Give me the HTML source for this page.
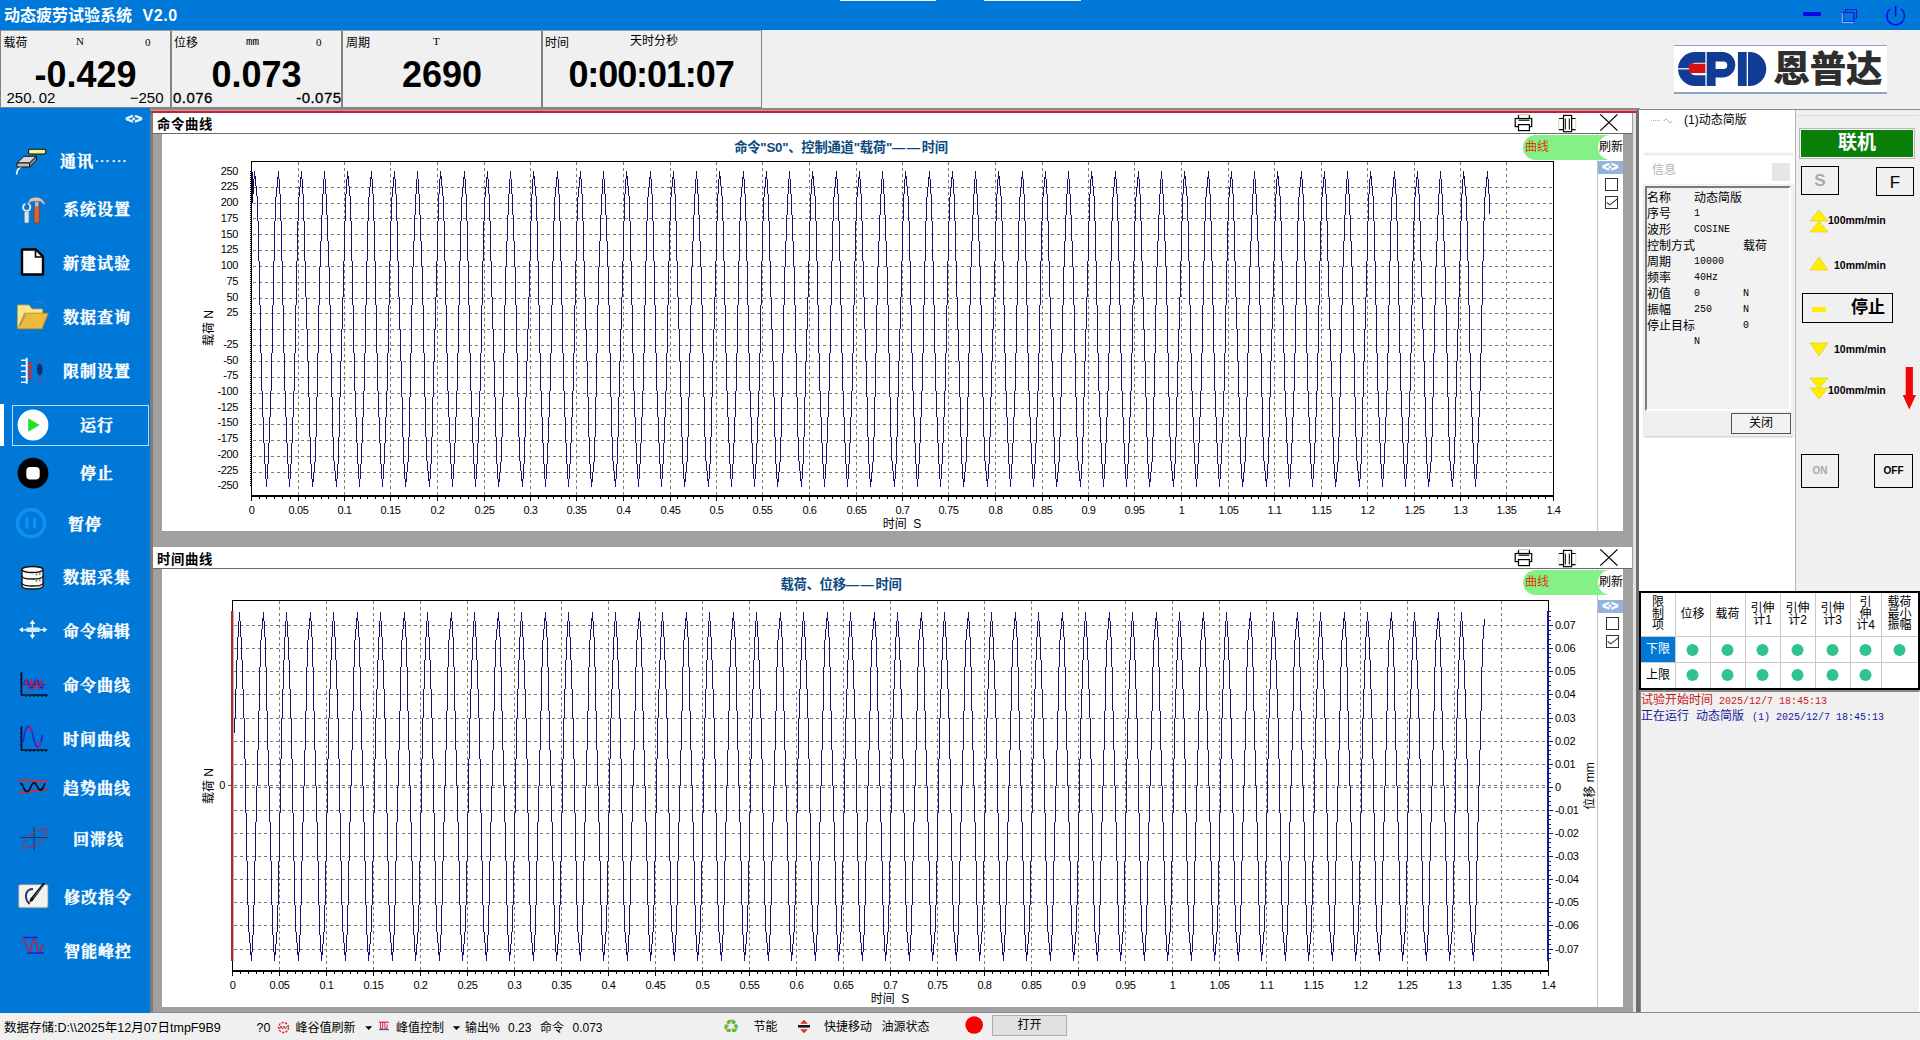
<!DOCTYPE html><html lang="zh-CN"><head><meta charset="utf-8"><title>动态疲劳试验系统 V2.0</title><style>*{box-sizing:border-box;margin:0;padding:0}
html,body{width:1920px;height:1040px;overflow:hidden;background:#f0f0f0}
body{position:relative;font-family:"Liberation Sans","Noto Sans CJK SC",sans-serif;font-size:12px;color:#000}
.a{position:absolute;white-space:nowrap}
.ss{font-family:"Liberation Sans","Noto Sans CJK SC",sans-serif}
.sf{font-family:"Liberation Serif","Noto Serif CJK SC",serif}
.mono{font-family:"Liberation Mono","Noto Sans CJK SC",monospace}
.b{font-weight:bold}
.c{text-align:center}
.r{text-align:right}
.menu{color:#fff;-webkit-text-stroke:.35px #fff;font-family:"Liberation Serif","Noto Serif CJK SC",serif;font-weight:bold;font-size:16px;letter-spacing:1px;line-height:20px}
.big{font-weight:bold;font-size:36px;line-height:40px;text-align:center}
.tick{font-size:11px;line-height:12px;color:#000;letter-spacing:-.4px}
svg{position:absolute;left:0;top:0;overflow:visible}
.sm{font-family:"Liberation Mono",monospace;font-size:10px;transform:scaleY(1.18);transform-origin:0 55%}
</style></head><body><div class="a " style="left:0px;top:0px;width:1920px;height:30px;background:#0078d7"></div><div class="a " style="left:4px;top:4px;color:#fff;font-weight:bold;font-size:16px;line-height:24px">动态疲劳试验系统&nbsp; <span style="letter-spacing:.6px;margin-left:1.500px">V2.0</span></div><div class="a " style="left:840px;top:0px;width:96px;height:1px;background:#f0f0f0"></div><div class="a " style="left:984px;top:0px;width:97px;height:1px;background:#f0f0f0"></div><svg width="1920" height="30" viewBox="0 0 1920 30"><rect x="1803" y="12" width="18" height="4" fill="#0606e0"/><path d="M1845.500 12V9.500H1856.500V18.500H1854" fill="none" stroke="#1818d8" stroke-width="1.200"/><rect x="1842.800" y="12.500" width="11" height="9.500" fill="none" stroke="#1818d8" stroke-width="1.200"/><path d="M1842.300 13V22.600H1853.500" fill="none" stroke="#c8dcf4" stroke-width="1" opacity=".8"/><path d="M1890.300 9A8.800 8.800 0 1 0 1901 9" fill="none" stroke="#0a0af0" stroke-width="1.500"/><path d="M1895.600 6V16.500" stroke="#0a0af0" stroke-width="1.600"/></svg><div class="a " style="left:0px;top:30px;width:1920px;height:79px;background:#f0f0f0"></div><div class="a " style="left:0px;top:30px;width:171px;height:78px;border:1px solid #828282;border-top-color:#a0a0a0;background:#f0f0f0"></div><div class="a " style="left:171px;top:30px;width:171px;height:78px;border:1px solid #828282;border-top-color:#a0a0a0;background:#f0f0f0"></div><div class="a " style="left:342px;top:30px;width:200px;height:78px;border:1px solid #828282;border-top-color:#a0a0a0;background:#f0f0f0"></div><div class="a " style="left:542px;top:30px;width:220px;height:78px;border:1px solid #828282;border-top-color:#a0a0a0;background:#f0f0f0"></div><div class="a " style="left:3.5px;top:36px;font-size:12px;line-height:14px">载荷</div><div class="a sf" style="left:76px;top:34px;font-size:12px;line-height:14px;font-size:11px">N</div><div class="a sf" style="left:145px;top:35px;font-size:12px;line-height:14px;font-size:11px">0</div><div class="a " style="left:174px;top:36px;font-size:12px;line-height:14px">位移</div><div class="a mono" style="left:246px;top:35px;font-size:12px;line-height:14px;font-size:11px">mm</div><div class="a sf" style="left:316px;top:35px;font-size:12px;line-height:14px;font-size:11px">0</div><div class="a " style="left:346px;top:36px;font-size:12px;line-height:14px">周期</div><div class="a sf" style="left:433px;top:34px;font-size:12px;line-height:14px;font-size:11px">T</div><div class="a " style="left:545px;top:36px;font-size:12px;line-height:14px">时间</div><div class="a " style="left:630px;top:33.5px;font-size:12px;line-height:14px">天时分秒</div><div class="a big" style="left:0px;top:55px;width:171px;height:40px;">-0.429</div><div class="a big" style="left:171px;top:55px;width:171px;height:40px;">0.073</div><div class="a big" style="left:342px;top:55px;width:200px;height:40px;">2690</div><div class="a big" style="left:541px;top:55px;width:220px;height:40px;letter-spacing:-1.100px">0:00:01:07</div><div class="a " style="left:6.5px;top:89.5px;font-size:15px;line-height:16px">250.&#8201;02</div><div class="a " style="left:100px;top:89.5px;width:63.5px;height:16px;font-size:15px;line-height:16px;text-align:right">−250</div><div class="a " style="left:173px;top:90px;font-size:15px;line-height:16px;letter-spacing:.45px;-webkit-text-stroke:.3px #000">0.076</div><div class="a " style="left:280px;top:90px;width:61.5px;height:16px;font-size:15px;line-height:16px;letter-spacing:.45px;-webkit-text-stroke:.3px #000;text-align:right">-0.075</div><div class="a " style="left:1674px;top:45px;width:213px;height:49px;background:#fff"></div><div class="a " style="left:1674px;top:44.8px;width:213px;height:1.6px;background:#8ea4c4"></div><div class="a " style="left:1674px;top:92.2px;width:213px;height:1.8px;background:#8ea4c4"></div><svg width="1920" height="110" viewBox="0 0 1920 110"><path d="M1705.400 52H1695A17 17 0 0 0 1695 86H1705.400V75.300H1695.500A6.300 6.300 0 0 1 1695.500 62.700H1705.400Z" fill="#103c96"/><rect x="1678" y="68.200" width="11" height="1.200" fill="#fff"/><rect x="1689" y="63.700" width="16.400" height="9.400" fill="#d41414"/><path d="M1706.700 52H1722.500A12.800 12.800 0 0 1 1722.500 77.600H1715.600V86H1706.700ZM1715.600 61.500V69H1723.500A3.750 3.750 0 0 0 1723.500 61.500Z" fill="#103c96" fill-rule="evenodd"/><rect x="1737.900" y="52" width="8.800" height="34" fill="#103c96"/><path d="M1748 52H1749.500A16.800 17 0 0 1 1749.500 86H1748Z" fill="#103c96"/></svg><div class="a " style="left:1773.5px;top:47.5px;font-size:36.500px;line-height:44px;font-weight:900;color:#2e2e2e;letter-spacing:-0.300px">恩普达</div><div class="a " style="left:0px;top:108px;width:150px;height:905px;background:#0078d7"></div><div class="a " style="left:125.5px;top:110.5px;color:#eefaff;font-weight:bold;font-size:12.500px;line-height:16px;letter-spacing:-1.100px;-webkit-text-stroke:.7px #eefaff">&lt;·&gt;</div><div class="a " style="left:0px;top:404px;width:4px;height:42px;background:#fff"></div><div class="a " style="left:12px;top:404.5px;width:137px;height:41.5px;border:1px solid #b8dcf4"></div><div class="a menu" style="left:60px;top:151px;">通讯<span style="font-family:'Noto Serif CJK SC',serif">……</span></div><div class="a menu" style="left:63px;top:200px;">系统设置</div><div class="a menu" style="left:63px;top:254px;">新建试验</div><div class="a menu" style="left:63px;top:308px;">数据查询</div><div class="a menu" style="left:63px;top:362px;">限制设置</div><div class="a menu" style="left:80px;top:416px;">运行</div><div class="a menu" style="left:80px;top:464px;">停止</div><div class="a menu" style="left:68px;top:515px;">暂停</div><div class="a menu" style="left:63px;top:568px;">数据采集</div><div class="a menu" style="left:63px;top:622px;">命令编辑</div><div class="a menu" style="left:63px;top:676px;">命令曲线</div><div class="a menu" style="left:63px;top:730px;">时间曲线</div><div class="a menu" style="left:63px;top:779px;">趋势曲线</div><div class="a menu" style="left:73px;top:830px;">回滞线</div><div class="a menu" style="left:64px;top:888px;">修改指令</div><div class="a menu" style="left:64px;top:942px;">智能峰控</div><svg width="160" height="1040" viewBox="0 0 160 1040"><path d="M22.500 166Q17 168 16.600 174.500" fill="none" stroke="#fff" stroke-width="1.800"/><path d="M17 163L24 156.300H36.500L29.600 163Z" fill="#d6d6d6" stroke="#111" stroke-width="1"/><path d="M17 163H29.600V167H17Z" fill="#c0c0c0" stroke="#111" stroke-width="1"/><path d="M29.600 163L36.500 156.300V160.300L29.600 167Z" fill="#8a8a8a" stroke="#111" stroke-width="1"/><rect x="28.500" y="149.300" width="17.300" height="4.700" rx="1.500" fill="#f6ec70" stroke="#111" stroke-width="1.100"/><path d="M31 151.700H44" stroke="#fff" stroke-width="1.200" stroke-dasharray="1 1"/><path d="M34.200 206H39.200V222.300Q36.700 224 34.200 222.300Z" fill="#e4602c" stroke="#9a3210" stroke-width=".6"/><path d="M35 200H38.500V206.500H35Z" fill="#b8bcc0"/><path d="M28 203Q29 198 33 197.500Q41 195.500 45 203Q45.500 205 43.500 204.500Q41 201 38.500 201.500H33Q30 201.500 29 204Z" fill="#c4c8cc" stroke="#5a6068" stroke-width=".7"/><circle cx="26.700" cy="207.300" r="3.600" fill="none" stroke="#e4e8ec" stroke-width="2"/><path d="M24.500 211.500H28.900V222.300Q26.700 223.600 24.500 222.300Z" fill="#e0e4e8" stroke="#8a9098" stroke-width=".5"/><path d="M25.500 203L28.500 206" stroke="#0078d7" stroke-width="1.800"/><path d="M22 249.500H36L43 256.500V274.500H22Z" fill="#fff" stroke="#000" stroke-width="2.400" stroke-linejoin="round"/><path d="M35.500 250.500V257H42" fill="none" stroke="#000" stroke-width="1.600"/><path d="M17.500 305H29L32 309H42.500V328.500H17.500Z" fill="#f6e58c" stroke="#c8a848" stroke-width=".8"/><path d="M17.800 328.800L24.500 313.200H48.300L42 328.800Z" fill="#eebc3c" stroke="#b8861c" stroke-width=".8"/><path d="M20 325L25.500 315" stroke="#8a7860" stroke-width="1.400" stroke-dasharray="1.500 1"/><path d="M36 302Q43 300 46 307" fill="none" stroke="#8a8aa0" stroke-width="1" stroke-dasharray="2 1.500" opacity=".8"/><path d="M26.700 357.800V383.700" stroke="#f0f8ff" stroke-width="2"/><path d="M21 360.200H26M21 365.700H26M21 371.200H26M21 376.700H26M21 382.200H26" stroke="#f0f8ff" stroke-width="1.600"/><path d="M30 362V380" stroke="#e02020" stroke-width="3.500" stroke-dasharray="2.500 1.200"/><path d="M39.700 358.500V383.500" stroke="#c83848" stroke-width="1.200" stroke-dasharray="3 1.500"/><ellipse cx="39.700" cy="369.500" rx="2.800" ry="6" fill="#10306c"/><circle cx="33" cy="425" r="15.400" fill="#fff"/><path d="M28.200 418.300L39.700 425L28.200 431.700Z" fill="#22e022"/><circle cx="33" cy="473.200" r="15.400" fill="#000"/><rect x="26.300" y="467" width="13.400" height="12.600" rx="3.800" fill="#fff"/><circle cx="31" cy="523.200" r="13.500" fill="none" stroke="#1290f2" stroke-width="3.800"/><rect x="25.300" y="517.300" width="3.300" height="11.600" rx="1.600" fill="#1290f2"/><rect x="33" y="517.300" width="3.300" height="11.600" rx="1.600" fill="#1290f2"/><g fill="#fafafa" stroke="#111" stroke-width="1.300"><path d="M22 583V586Q22 589 32.500 589T43 586V583Z"/><path d="M22 576V583Q22 586 32.500 586T43 583V576Z"/><path d="M22 569.500V576Q22 579 32.500 579T43 576V569.500Z"/><ellipse cx="32.500" cy="569.500" rx="10.500" ry="3"/></g><g fill="#30b030"><circle cx="36.500" cy="574.500" r=".9"/><circle cx="36.500" cy="581" r=".9"/><circle cx="36.500" cy="586.500" r=".9"/></g><g fill="#e03030"><circle cx="39.800" cy="573.800" r=".9"/><circle cx="39.800" cy="580.300" r=".9"/><circle cx="39.800" cy="586" r=".9"/></g><g fill="#f4faff"><path d="M19 629.800L23 627V632.600ZM47.400 629.800L43.400 627V632.600ZM32.400 619.800L29.600 624H35.200ZM32.400 639L29.600 634.800H35.200Z"/><rect x="22" y="629.100" width="22" height="1.400"/><rect x="31.700" y="622" width="1.400" height="15"/><rect x="26.300" y="627.600" width="13.400" height="4.400" rx="1" fill="#d4e8ff"/></g><path d="M21.500 672V695H47.500" fill="none" stroke="#0c0c1c" stroke-width="1.600"/><path d="M20 675H21.500M20 679H21.500M20 683H21.500M20 687H21.500M20 691H21.500M26 695V697M30 695V697M34 695V697M38 695V697M42 695V697M46 695V697" stroke="#0c0c1c" stroke-width="1"/><path d="M24 684Q26.500 676 29 684T34 684T39 684T44 684" fill="none" stroke="#2020d0" stroke-width="1.400"/><path d="M24 685L26.500 680L29 689L31.500 680L34 689L36.500 680L39 689L41.500 680L44 686" fill="none" stroke="#c81838" stroke-width="1.200"/><path d="M23 684.500H45" stroke="#3030a8" stroke-width=".8"/><path d="M21.500 726V750H47.500" fill="none" stroke="#0c0c1c" stroke-width="1.600"/><path d="M20 729H21.500M20 733H21.500M20 737H21.500M20 741H21.500M20 745H21.500M26 750V752M30 750V752M34 750V752M38 750V752M42 750V752M46 750V752" stroke="#0c0c1c" stroke-width="1"/><path d="M23 742C26 722 30 722 33 736S39 752 42.600 735" fill="none" stroke="#2222e8" stroke-width="1.700"/><path d="M27 730L30 727.500L32 731M36.500 742L38.500 746L41 742" fill="none" stroke="#d02040" stroke-width="1.300"/><path d="M18.600 779.800L47.400 781.700M18.600 793.300L47.400 789.400" stroke="#d82838" stroke-width="1.700"/><path d="M20 784C23.500 782 23 791.500 27 791.500S30.500 783 34 783S37 790 40.500 790S43 784 45.500 784" fill="none" stroke="#0c0c14" stroke-width="1.800"/><path d="M34 827V851M20.500 837.500H48.400" stroke="#1c3058" stroke-width="1"/><path d="M23 848C23 838 36 828 46.500 829C46.500 839 33 849.500 23 848Z" fill="none" stroke="#a83050" stroke-width="1.200"/><rect x="18.600" y="884.600" width="29.400" height="23" rx="1.500" fill="#f2f2f0" stroke="#8a8a8a" stroke-width=".8"/><path d="M20 907.500H47" stroke="#b0b0b0" stroke-width="1.200"/><path d="M33 889C26 889 23 897 29.500 904" fill="none" stroke="#203868" stroke-width="2"/><path d="M45.300 883.500L43 883L30 899L29.500 902.500L32.500 901Z" fill="#101010"/><path d="M43.500 885L33 898" stroke="#7888a0" stroke-width=".7"/><path d="M23.400 937.500H37.800M27.200 953H43.600" stroke="#1818e0" stroke-width="1.600"/><path d="M22.400 941C26 936 26.500 952 29.500 952S31 939 34 939S36 952 39 952S41 941 43.600 947" fill="none" stroke="#d01838" stroke-width="1.500"/></svg><div class="a " style="left:150px;top:108px;width:1490px;height:904.5px;background:#a0a0a0"></div><div class="a " style="left:150px;top:108px;width:2.5px;height:904.5px;background:#7c7c7c"></div><div class="a " style="left:1633px;top:108px;width:2.6px;height:904.5px;background:#e4e4e4"></div><div class="a " style="left:1635.6px;top:108px;width:4.4px;height:904.5px;background:#6e6e6e"></div><div class="a " style="left:150px;top:108px;width:1490px;height:2px;background:#8a8a8a"></div><div class="a " style="left:151px;top:110px;width:1485px;height:3px;background:linear-gradient(#f08890 0,#f08890 30%,#b8243c 48%,#b8243c 100%)"></div><div class="a " style="left:153px;top:113px;width:1479px;height:21px;background:#fff;border-bottom:1px solid #6a6a6a"></div><div class="a " style="left:157px;top:116.5px;font-weight:bold;font-size:13.330px;line-height:16px;letter-spacing:.7px">命令曲线</div><div class="a " style="left:162px;top:134px;width:1460.5px;height:397px;background:#fff"></div><div class="a " style="left:1597px;top:134px;width:1px;height:397px;background:#c4c4c4"></div><div class="a " style="left:1523px;top:135px;width:99px;height:25px;background:#84f088;border-radius:13px"></div><div class="a " style="left:1598px;top:134.7px;width:25px;height:25px;background:#fff;border-radius:50%"></div><div class="a " style="left:1525px;top:140px;color:#e03800;font-size:12px;line-height:14px">曲线</div><div class="a " style="left:1599px;top:140px;color:#000;font-size:12px;line-height:14px">刷新</div><div class="a " style="left:1598px;top:161px;width:25px;height:12.5px;background:#93b3de"></div><div class="a " style="left:1602.2px;top:159.2px;color:#fff;font-weight:bold;font-size:12px;line-height:16px;letter-spacing:-1px;-webkit-text-stroke:.6px #fff">&lt;·&gt;</div><div class="a " style="left:1605px;top:178px;width:13px;height:13px;border:1px solid #333;background:#fff"></div><div class="a " style="left:1605px;top:196px;width:13px;height:13px;border:1px solid #333;background:#fff"></div><div class="a " style="left:541px;top:140px;width:600px;height:16px;text-align:center;font-weight:bold;font-size:13.330px;line-height:16px;color:#0c4a80;letter-spacing:-.25px">命令"S0"、控制通道"载荷"<span style="letter-spacing:1.500px">——</span>时间</div><svg width="1920" height="1040" viewBox="0 0 1920 1040" shape-rendering="crispEdges"><g shape-rendering="auto"><g fill="none" stroke="#000" stroke-width="1.200"><rect x="1515.2" y="118.5" width="16.500" height="8.100"/><path d="M1518.5 118.5V114.9M1529.4 118.5V114.9" /><path d="M1518.5 114.7H1529.4" stroke="#a8e0a8"/><rect x="1518.5" y="124.6" width="10.900" height="6" fill="#fff"/><path d="M1518.5 120.2H1529.4"/></g><g fill="none" stroke="#000" stroke-width="1.200"><rect x="1563.5" y="115.4" width="8.100" height="16.300"/><path d="M1565.3 118.5V129.5M1569.3 118.5V129.5" stroke-width="1"/><path d="M1558.8 118.5H1563.5M1571.6 118.5H1575.8M1558.8 129.6H1563.5M1571.6 129.6H1575.8"/><path d="M1558.8 118.5V129.6M1575.8 118.5V129.6" stroke="#c0e4b8" stroke-width="1"/></g><path d="M1600.3 114.4L1617.5 130.6M1617.5 114.4L1600.3 130.6" stroke="#000" stroke-width="1.300"/><path d="M1606.7 202.3l3 2.600l7.400-5.800" fill="none" stroke="#333" stroke-width="1.100"/></g><path d="M298.5 162V495M344.5 162V495M390.5 162V495M437.5 162V495M484.5 162V495M530.5 162V495M576.5 162V495M623.5 162V495M670.5 162V495M716.5 162V495M762.5 162V495M809.5 162V495M856.5 162V495M902.5 162V495M948.5 162V495M995.5 162V495M1042.5 162V495M1088.5 162V495M1134.5 162V495M1181.5 162V495M1228.5 162V495M1274.5 162V495M1321.5 162V495M1367.5 162V495M1414.5 162V495M1460.5 162V495M1506.5 162V495" stroke="#787878" stroke-width="1" stroke-dasharray="3 3" fill="none"/><path d="M253 187.5H1553M253 203.5H1553M253 218.5H1553M253 234.5H1553M253 250.5H1553M253 266.5H1553M253 282.5H1553M253 298.5H1553M253 313.5H1553M253 329.5H1553M253 345.5H1553M253 361.5H1553M253 377.5H1553M253 393.5H1553M253 408.5H1553M253 424.5H1553M253 440.5H1553M253 456.5H1553M253 472.5H1553" stroke="#787878" stroke-width="1" stroke-dasharray="3 3" fill="none"/><path d="M252.5 194V202M253.5 179V194M254.5 171V179M255.5 176V186M256.5 186V196M257.5 196V221M258.5 221V261M259.5 261V305M260.5 305V353M261.5 353V391M262.5 391V417M263.5 417V443M264.5 443V464M265.5 464V479M266.5 479V487M267.5 464V479M268.5 443V464M269.5 417V443M270.5 391V417M271.5 353V391M272.5 305V353M273.5 261V305M274.5 221V261M275.5 197V221M276.5 187V197M277.5 177V187M278.5 171V179M279.5 179V194M280.5 194V221M281.5 221V261M282.5 261V305M283.5 305V353M284.5 353V391M285.5 391V417M286.5 417V443M287.5 443V464M288.5 464V479M289.5 479V487M290.5 464V479M291.5 443V464M292.5 417V443M293.5 391V417M294.5 353V391M295.5 305V353M296.5 261V305M297.5 221V261M298.5 197V221M299.5 187V197M300.5 177V187M301.5 171V179M302.5 179V194M303.5 194V221M304.5 221V261M305.5 261V297M306.5 297V329M307.5 329V361M308.5 361V397M309.5 397V437M310.5 437V464M311.5 464V479M312.5 479V487M313.5 472V482M314.5 462V472M315.5 437V462M316.5 397V437M317.5 353V397M318.5 305V353M319.5 267V305M320.5 241V267M321.5 215V241M322.5 194V215M323.5 179V194M324.5 171V179M325.5 179V194M326.5 194V215M327.5 215V241M328.5 241V267M329.5 267V305M330.5 305V353M331.5 353V397M332.5 397V437M333.5 437V461M334.5 461V471M335.5 471V481M336.5 479V487M337.5 464V479M338.5 437V464M339.5 397V437M340.5 361V397M341.5 329V361M342.5 297V329M343.5 261V297M344.5 221V261M345.5 194V221M346.5 179V194M347.5 171V179M348.5 176V186M349.5 186V196M350.5 196V221M351.5 221V261M352.5 261V305M353.5 305V353M354.5 353V391M355.5 391V417M356.5 417V443M357.5 443V464M358.5 464V479M359.5 479V487M360.5 464V479M361.5 443V464M362.5 417V443M363.5 391V417M364.5 353V391M365.5 305V353M366.5 261V305M367.5 221V261M368.5 197V221M369.5 187V197M370.5 177V187M371.5 171V179M372.5 179V194M373.5 194V221M374.5 221V261M375.5 261V305M376.5 305V353M377.5 353V391M378.5 391V417M379.5 417V443M380.5 443V464M381.5 464V479M382.5 479V487M383.5 464V479M384.5 443V464M385.5 417V443M386.5 391V417M387.5 353V391M388.5 305V353M389.5 261V305M390.5 221V261M391.5 197V221M392.5 187V197M393.5 177V187M394.5 171V179M395.5 179V194M396.5 194V221M397.5 221V261M398.5 261V297M399.5 297V329M400.5 329V361M401.5 361V397M402.5 397V437M403.5 437V464M404.5 464V479M405.5 479V487M406.5 472V482M407.5 462V472M408.5 437V462M409.5 397V437M410.5 353V397M411.5 305V353M412.5 267V305M413.5 241V267M414.5 215V241M415.5 194V215M416.5 179V194M417.5 171V179M418.5 179V194M419.5 194V215M420.5 215V241M421.5 241V267M422.5 267V305M423.5 305V353M424.5 353V397M425.5 397V437M426.5 437V461M427.5 461V471M428.5 471V481M429.5 479V487M430.5 464V479M431.5 437V464M432.5 397V437M433.5 361V397M434.5 329V361M435.5 297V329M436.5 261V297M437.5 221V261M438.5 194V221M439.5 179V194M440.5 171V179M441.5 176V186M442.5 186V196M443.5 196V221M444.5 221V261M445.5 261V305M446.5 305V353M447.5 353V391M448.5 391V417M449.5 417V443M450.5 443V464M451.5 464V479M452.5 479V487M453.5 464V479M454.5 443V464M455.5 417V443M456.5 391V417M457.5 353V391M458.5 305V353M459.5 261V305M460.5 221V261M461.5 197V221M462.5 187V197M463.5 177V187M464.5 171V179M465.5 179V194M466.5 194V221M467.5 221V261M468.5 261V305M469.5 305V353M470.5 353V391M471.5 391V417M472.5 417V443M473.5 443V464M474.5 464V479M475.5 479V487M476.5 464V479M477.5 443V464M478.5 417V443M479.5 391V417M480.5 353V391M481.5 305V353M482.5 261V305M483.5 221V261M484.5 197V221M485.5 187V197M486.5 177V187M487.5 171V179M488.5 179V194M489.5 194V221M490.5 221V261M491.5 261V297M492.5 297V329M493.5 329V361M494.5 361V397M495.5 397V437M496.5 437V464M497.5 464V479M498.5 479V487M499.5 472V482M500.5 462V472M501.5 437V462M502.5 397V437M503.5 353V397M504.5 305V353M505.5 267V305M506.5 241V267M507.5 215V241M508.5 194V215M509.5 179V194M510.5 171V179M511.5 179V194M512.5 194V215M513.5 215V241M514.5 241V267M515.5 267V305M516.5 305V353M517.5 353V397M518.5 397V437M519.5 437V461M520.5 461V471M521.5 471V481M522.5 479V487M523.5 464V479M524.5 437V464M525.5 397V437M526.5 361V397M527.5 329V361M528.5 297V329M529.5 261V297M530.5 221V261M531.5 194V221M532.5 179V194M533.5 171V179M534.5 176V186M535.5 186V196M536.5 196V221M537.5 221V261M538.5 261V305M539.5 305V353M540.5 353V391M541.5 391V417M542.5 417V443M543.5 443V464M544.5 464V479M545.5 479V487M546.5 464V479M547.5 443V464M548.5 417V443M549.5 391V417M550.5 353V391M551.5 305V353M552.5 261V305M553.5 221V261M554.5 197V221M555.5 187V197M556.5 177V187M557.5 171V179M558.5 179V194M559.5 194V221M560.5 221V261M561.5 261V305M562.5 305V353M563.5 353V391M564.5 391V417M565.5 417V443M566.5 443V464M567.5 464V479M568.5 479V487M569.5 464V479M570.5 443V464M571.5 417V443M572.5 391V417M573.5 353V391M574.5 305V353M575.5 261V305M576.5 221V261M577.5 197V221M578.5 187V197M579.5 177V187M580.5 171V179M581.5 179V194M582.5 194V221M583.5 221V261M584.5 261V297M585.5 297V329M586.5 329V361M587.5 361V397M588.5 397V437M589.5 437V464M590.5 464V479M591.5 479V487M592.5 472V482M593.5 462V472M594.5 437V462M595.5 397V437M596.5 353V397M597.5 305V353M598.5 267V305M599.5 241V267M600.5 215V241M601.5 194V215M602.5 179V194M603.5 171V179M604.5 179V194M605.5 194V215M606.5 215V241M607.5 241V267M608.5 267V305M609.5 305V353M610.5 353V397M611.5 397V437M612.5 437V461M613.5 461V471M614.5 471V481M615.5 479V487M616.5 464V479M617.5 437V464M618.5 397V437M619.5 361V397M620.5 329V361M621.5 297V329M622.5 261V297M623.5 221V261M624.5 194V221M625.5 179V194M626.5 171V179M627.5 176V186M628.5 186V196M629.5 196V221M630.5 221V261M631.5 261V305M632.5 305V353M633.5 353V391M634.5 391V417M635.5 417V443M636.5 443V464M637.5 464V479M638.5 479V487M639.5 464V479M640.5 443V464M641.5 417V443M642.5 391V417M643.5 353V391M644.5 305V353M645.5 261V305M646.5 221V261M647.5 197V221M648.5 187V197M649.5 177V187M650.5 171V179M651.5 179V194M652.5 194V221M653.5 221V261M654.5 261V305M655.5 305V353M656.5 353V391M657.5 391V417M658.5 417V443M659.5 443V464M660.5 464V479M661.5 479V487M662.5 464V479M663.5 443V464M664.5 417V443M665.5 391V417M666.5 353V391M667.5 305V353M668.5 261V305M669.5 221V261M670.5 197V221M671.5 187V197M672.5 177V187M673.5 171V179M674.5 179V194M675.5 194V221M676.5 221V261M677.5 261V297M678.5 297V329M679.5 329V361M680.5 361V397M681.5 397V437M682.5 437V464M683.5 464V479M684.5 479V487M685.5 472V482M686.5 462V472M687.5 437V462M688.5 397V437M689.5 353V397M690.5 305V353M691.5 267V305M692.5 241V267M693.5 215V241M694.5 194V215M695.5 179V194M696.5 171V179M697.5 179V194M698.5 194V215M699.5 215V241M700.5 241V267M701.5 267V305M702.5 305V353M703.5 353V397M704.5 397V437M705.5 437V461M706.5 461V471M707.5 471V481M708.5 479V487M709.5 464V479M710.5 437V464M711.5 397V437M712.5 361V397M713.5 329V361M714.5 297V329M715.5 261V297M716.5 221V261M717.5 194V221M718.5 179V194M719.5 171V179M720.5 176V186M721.5 186V196M722.5 196V221M723.5 221V261M724.5 261V305M725.5 305V353M726.5 353V391M727.5 391V417M728.5 417V443M729.5 443V464M730.5 464V479M731.5 479V487M732.5 464V479M733.5 443V464M734.5 417V443M735.5 391V417M736.5 353V391M737.5 305V353M738.5 261V305M739.5 221V261M740.5 197V221M741.5 187V197M742.5 177V187M743.5 171V179M744.5 179V194M745.5 194V221M746.5 221V261M747.5 261V305M748.5 305V353M749.5 353V391M750.5 391V417M751.5 417V443M752.5 443V464M753.5 464V479M754.5 479V487M755.5 464V479M756.5 443V464M757.5 417V443M758.5 391V417M759.5 353V391M760.5 305V353M761.5 261V305M762.5 221V261M763.5 197V221M764.5 187V197M765.5 177V187M766.5 171V179M767.5 179V194M768.5 194V221M769.5 221V261M770.5 261V297M771.5 297V329M772.5 329V361M773.5 361V397M774.5 397V437M775.5 437V464M776.5 464V479M777.5 479V487M778.5 472V482M779.5 462V472M780.5 437V462M781.5 397V437M782.5 353V397M783.5 305V353M784.5 267V305M785.5 241V267M786.5 215V241M787.5 194V215M788.5 179V194M789.5 171V179M790.5 179V194M791.5 194V215M792.5 215V241M793.5 241V267M794.5 267V305M795.5 305V353M796.5 353V397M797.5 397V437M798.5 437V461M799.5 461V471M800.5 471V481M801.5 479V487M802.5 464V479M803.5 437V464M804.5 397V437M805.5 361V397M806.5 329V361M807.5 297V329M808.5 261V297M809.5 221V261M810.5 194V221M811.5 179V194M812.5 171V179M813.5 176V186M814.5 186V196M815.5 196V221M816.5 221V261M817.5 261V305M818.5 305V353M819.5 353V391M820.5 391V417M821.5 417V443M822.5 443V464M823.5 464V479M824.5 479V487M825.5 464V479M826.5 443V464M827.5 417V443M828.5 391V417M829.5 353V391M830.5 305V353M831.5 261V305M832.5 221V261M833.5 197V221M834.5 187V197M835.5 177V187M836.5 171V179M837.5 179V194M838.5 194V221M839.5 221V261M840.5 261V305M841.5 305V353M842.5 353V391M843.5 391V417M844.5 417V443M845.5 443V464M846.5 464V479M847.5 479V487M848.5 464V479M849.5 443V464M850.5 417V443M851.5 391V417M852.5 353V391M853.5 305V353M854.5 261V305M855.5 221V261M856.5 197V221M857.5 187V197M858.5 177V187M859.5 171V179M860.5 179V194M861.5 194V221M862.5 221V261M863.5 261V297M864.5 297V329M865.5 329V361M866.5 361V397M867.5 397V437M868.5 437V464M869.5 464V479M870.5 479V487M871.5 472V482M872.5 462V472M873.5 437V462M874.5 397V437M875.5 353V397M876.5 305V353M877.5 267V305M878.5 241V267M879.5 215V241M880.5 194V215M881.5 179V194M882.5 171V179M883.5 179V194M884.5 194V215M885.5 215V241M886.5 241V267M887.5 267V305M888.5 305V353M889.5 353V397M890.5 397V437M891.5 437V461M892.5 461V471M893.5 471V481M894.5 479V487M895.5 464V479M896.5 437V464M897.5 397V437M898.5 361V397M899.5 329V361M900.5 297V329M901.5 261V297M902.5 221V261M903.5 194V221M904.5 179V194M905.5 171V179M906.5 176V186M907.5 186V196M908.5 196V221M909.5 221V261M910.5 261V305M911.5 305V353M912.5 353V391M913.5 391V417M914.5 417V443M915.5 443V464M916.5 464V479M917.5 479V487M918.5 464V479M919.5 443V464M920.5 417V443M921.5 391V417M922.5 353V391M923.5 305V353M924.5 261V305M925.5 221V261M926.5 197V221M927.5 187V197M928.5 177V187M929.5 171V179M930.5 179V194M931.5 194V221M932.5 221V261M933.5 261V305M934.5 305V353M935.5 353V391M936.5 391V417M937.5 417V443M938.5 443V464M939.5 464V479M940.5 479V487M941.5 464V479M942.5 443V464M943.5 417V443M944.5 391V417M945.5 353V391M946.5 305V353M947.5 261V305M948.5 221V261M949.5 197V221M950.5 187V197M951.5 177V187M952.5 171V179M953.5 179V194M954.5 194V221M955.5 221V261M956.5 261V297M957.5 297V329M958.5 329V361M959.5 361V397M960.5 397V437M961.5 437V464M962.5 464V479M963.5 479V487M964.5 472V482M965.5 462V472M966.5 437V462M967.5 397V437M968.5 353V397M969.5 305V353M970.5 267V305M971.5 241V267M972.5 215V241M973.5 194V215M974.5 179V194M975.5 171V179M976.5 179V194M977.5 194V215M978.5 215V241M979.5 241V267M980.5 267V305M981.5 305V353M982.5 353V397M983.5 397V437M984.5 437V461M985.5 461V471M986.5 471V481M987.5 479V487M988.5 464V479M989.5 437V464M990.5 397V437M991.5 361V397M992.5 329V361M993.5 297V329M994.5 261V297M995.5 221V261M996.5 194V221M997.5 179V194M998.5 171V179M999.5 176V186M1000.5 186V196M1001.5 196V221M1002.5 221V261M1003.5 261V305M1004.5 305V353M1005.5 353V391M1006.5 391V417M1007.5 417V443M1008.5 443V464M1009.5 464V479M1010.5 479V487M1011.5 464V479M1012.5 443V464M1013.5 417V443M1014.5 391V417M1015.5 353V391M1016.5 305V353M1017.5 261V305M1018.5 221V261M1019.5 197V221M1020.5 187V197M1021.5 177V187M1022.5 171V179M1023.5 179V194M1024.5 194V221M1025.5 221V261M1026.5 261V305M1027.5 305V353M1028.5 353V391M1029.5 391V417M1030.5 417V443M1031.5 443V464M1032.5 464V479M1033.5 479V487M1034.5 464V479M1035.5 443V464M1036.5 417V443M1037.5 391V417M1038.5 353V391M1039.5 305V353M1040.5 261V305M1041.5 221V261M1042.5 197V221M1043.5 187V197M1044.5 177V187M1045.5 171V179M1046.5 179V194M1047.5 194V221M1048.5 221V261M1049.5 261V297M1050.5 297V329M1051.5 329V361M1052.5 361V397M1053.5 397V437M1054.5 437V464M1055.5 464V479M1056.5 479V487M1057.5 472V482M1058.5 462V472M1059.5 437V462M1060.5 397V437M1061.5 353V397M1062.5 305V353M1063.5 267V305M1064.5 241V267M1065.5 215V241M1066.5 194V215M1067.5 179V194M1068.5 171V179M1069.5 179V194M1070.5 194V215M1071.5 215V241M1072.5 241V267M1073.5 267V305M1074.5 305V353M1075.5 353V397M1076.5 397V437M1077.5 437V461M1078.5 461V471M1079.5 471V481M1080.5 479V487M1081.5 464V479M1082.5 437V464M1083.5 397V437M1084.5 361V397M1085.5 329V361M1086.5 297V329M1087.5 261V297M1088.5 221V261M1089.5 194V221M1090.5 179V194M1091.5 171V179M1092.5 176V186M1093.5 186V196M1094.5 196V221M1095.5 221V261M1096.5 261V305M1097.5 305V353M1098.5 353V391M1099.5 391V417M1100.5 417V443M1101.5 443V464M1102.5 464V479M1103.5 479V487M1104.5 464V479M1105.5 443V464M1106.5 417V443M1107.5 391V417M1108.5 353V391M1109.5 305V353M1110.5 261V305M1111.5 221V261M1112.5 197V221M1113.5 187V197M1114.5 177V187M1115.5 171V179M1116.5 179V194M1117.5 194V221M1118.5 221V261M1119.5 261V305M1120.5 305V353M1121.5 353V391M1122.5 391V417M1123.5 417V443M1124.5 443V464M1125.5 464V479M1126.5 479V487M1127.5 464V479M1128.5 443V464M1129.5 417V443M1130.5 391V417M1131.5 353V391M1132.5 305V353M1133.5 261V305M1134.5 221V261M1135.5 197V221M1136.5 187V197M1137.5 177V187M1138.5 171V179M1139.5 179V194M1140.5 194V221M1141.5 221V261M1142.5 261V297M1143.5 297V329M1144.5 329V361M1145.5 361V397M1146.5 397V437M1147.5 437V464M1148.5 464V479M1149.5 479V487M1150.5 472V482M1151.5 462V472M1152.5 437V462M1153.5 397V437M1154.5 353V397M1155.5 305V353M1156.5 267V305M1157.5 241V267M1158.5 215V241M1159.5 194V215M1160.5 179V194M1161.5 171V179M1162.5 179V194M1163.5 194V215M1164.5 215V241M1165.5 241V267M1166.5 267V305M1167.5 305V353M1168.5 353V397M1169.5 397V437M1170.5 437V461M1171.5 461V471M1172.5 471V481M1173.5 479V487M1174.5 464V479M1175.5 437V464M1176.5 397V437M1177.5 361V397M1178.5 329V361M1179.5 297V329M1180.5 261V297M1181.5 221V261M1182.5 194V221M1183.5 179V194M1184.5 171V179M1185.5 176V186M1186.5 186V196M1187.5 196V221M1188.5 221V261M1189.5 261V305M1190.5 305V353M1191.5 353V391M1192.5 391V417M1193.5 417V443M1194.5 443V464M1195.5 464V479M1196.5 479V487M1197.5 464V479M1198.5 443V464M1199.5 417V443M1200.5 391V417M1201.5 353V391M1202.5 305V353M1203.5 261V305M1204.5 221V261M1205.5 197V221M1206.5 187V197M1207.5 177V187M1208.5 171V179M1209.5 179V194M1210.5 194V221M1211.5 221V261M1212.5 261V305M1213.5 305V353M1214.5 353V391M1215.5 391V417M1216.5 417V443M1217.5 443V464M1218.5 464V479M1219.5 479V487M1220.5 464V479M1221.5 443V464M1222.5 417V443M1223.5 391V417M1224.5 353V391M1225.5 305V353M1226.5 261V305M1227.5 221V261M1228.5 197V221M1229.5 187V197M1230.5 177V187M1231.5 171V179M1232.5 179V194M1233.5 194V221M1234.5 221V261M1235.5 261V297M1236.5 297V329M1237.5 329V361M1238.5 361V397M1239.5 397V437M1240.5 437V464M1241.5 464V479M1242.5 479V487M1243.5 472V482M1244.5 462V472M1245.5 437V462M1246.5 397V437M1247.5 353V397M1248.5 305V353M1249.5 267V305M1250.5 241V267M1251.5 215V241M1252.5 194V215M1253.5 179V194M1254.5 171V179M1255.5 179V194M1256.5 194V215M1257.5 215V241M1258.5 241V267M1259.5 267V305M1260.5 305V353M1261.5 353V397M1262.5 397V437M1263.5 437V461M1264.5 461V471M1265.5 471V481M1266.5 479V487M1267.5 464V479M1268.5 437V464M1269.5 397V437M1270.5 361V397M1271.5 329V361M1272.5 297V329M1273.5 261V297M1274.5 221V261M1275.5 194V221M1276.5 179V194M1277.5 171V179M1278.5 176V186M1279.5 186V196M1280.5 196V221M1281.5 221V261M1282.5 261V305M1283.5 305V353M1284.5 353V391M1285.5 391V417M1286.5 417V443M1287.5 443V464M1288.5 464V479M1289.5 479V487M1290.5 464V479M1291.5 443V464M1292.5 417V443M1293.5 391V417M1294.5 353V391M1295.5 305V353M1296.5 261V305M1297.5 221V261M1298.5 197V221M1299.5 187V197M1300.5 177V187M1301.5 171V179M1302.5 179V194M1303.5 194V221M1304.5 221V261M1305.5 261V305M1306.5 305V353M1307.5 353V391M1308.5 391V417M1309.5 417V443M1310.5 443V464M1311.5 464V479M1312.5 479V487M1313.5 464V479M1314.5 443V464M1315.5 417V443M1316.5 391V417M1317.5 353V391M1318.5 305V353M1319.5 261V305M1320.5 221V261M1321.5 197V221M1322.5 187V197M1323.5 177V187M1324.5 171V179M1325.5 179V194M1326.5 194V221M1327.5 221V261M1328.5 261V297M1329.5 297V329M1330.5 329V361M1331.5 361V397M1332.5 397V437M1333.5 437V464M1334.5 464V479M1335.5 479V487M1336.5 472V482M1337.5 462V472M1338.5 437V462M1339.5 397V437M1340.5 353V397M1341.5 305V353M1342.5 267V305M1343.5 241V267M1344.5 215V241M1345.5 194V215M1346.5 179V194M1347.5 171V179M1348.5 179V194M1349.5 194V215M1350.5 215V241M1351.5 241V267M1352.5 267V305M1353.5 305V353M1354.5 353V397M1355.5 397V437M1356.5 437V461M1357.5 461V471M1358.5 471V481M1359.5 479V487M1360.5 464V479M1361.5 437V464M1362.5 397V437M1363.5 361V397M1364.5 329V361M1365.5 297V329M1366.5 261V297M1367.5 221V261M1368.5 194V221M1369.5 179V194M1370.5 171V179M1371.5 176V186M1372.5 186V196M1373.5 196V221M1374.5 221V261M1375.5 261V305M1376.5 305V353M1377.5 353V391M1378.5 391V417M1379.5 417V443M1380.5 443V464M1381.5 464V479M1382.5 479V487M1383.5 464V479M1384.5 443V464M1385.5 417V443M1386.5 391V417M1387.5 353V391M1388.5 305V353M1389.5 261V305M1390.5 221V261M1391.5 197V221M1392.5 187V197M1393.5 177V187M1394.5 171V179M1395.5 179V194M1396.5 194V221M1397.5 221V261M1398.5 261V305M1399.5 305V353M1400.5 353V391M1401.5 391V417M1402.5 417V443M1403.5 443V464M1404.5 464V479M1405.5 479V487M1406.5 464V479M1407.5 443V464M1408.5 417V443M1409.5 391V417M1410.5 353V391M1411.5 305V353M1412.5 261V305M1413.5 221V261M1414.5 197V221M1415.5 187V197M1416.5 177V187M1417.5 171V179M1418.5 179V194M1419.5 194V221M1420.5 221V261M1421.5 261V297M1422.5 297V329M1423.5 329V361M1424.5 361V397M1425.5 397V437M1426.5 437V464M1427.5 464V479M1428.5 479V487M1429.5 472V482M1430.5 462V472M1431.5 437V462M1432.5 397V437M1433.5 353V397M1434.5 305V353M1435.5 267V305M1436.5 241V267M1437.5 215V241M1438.5 194V215M1439.5 179V194M1440.5 171V179M1441.5 179V194M1442.5 194V215M1443.5 215V241M1444.5 241V267M1445.5 267V305M1446.5 305V353M1447.5 353V397M1448.5 397V437M1449.5 437V461M1450.5 461V471M1451.5 471V481M1452.5 479V487M1453.5 464V479M1454.5 437V464M1455.5 397V437M1456.5 361V397M1457.5 329V361M1458.5 297V329M1459.5 261V297M1460.5 221V261M1461.5 194V221M1462.5 179V194M1463.5 171V179M1464.5 176V186M1465.5 186V196M1466.5 196V221M1467.5 221V261M1468.5 261V305M1469.5 305V353M1470.5 353V391M1471.5 391V417M1472.5 417V443M1473.5 443V464M1474.5 464V479M1475.5 479V487M1476.5 464V479M1477.5 443V464M1478.5 417V443M1479.5 391V417M1480.5 353V391M1481.5 305V353M1482.5 261V305M1483.5 221V261M1484.5 197V221M1485.5 187V197M1486.5 177V187M1487.5 171V179M1488.5 179V194M1489.5 194V214" stroke="#14146e" stroke-width="1" fill="none"/><path d="M250.5 171V487" stroke="#000" stroke-width="1" stroke-dasharray="1 1"/><path d="M252.500 172V203" stroke="#10103c" stroke-width="1"/><path d="M266.5 483V487M289.5 483V487M312.5 483V487M336.5 483V487M359.5 483V487M382.5 483V487M405.5 483V487M429.5 483V487M452.5 483V487M475.5 483V487M498.5 483V487M522.5 483V487M545.5 483V487M568.5 483V487M591.5 483V487M615.5 483V487M638.5 483V487M661.5 483V487M684.5 483V487M708.5 483V487M731.5 483V487M754.5 483V487M777.5 483V487M801.5 483V487M824.5 483V487M847.5 483V487M870.5 483V487M894.5 483V487M917.5 483V487M940.5 483V487M963.5 483V487M987.5 483V487M1010.5 483V487M1033.5 483V487M1056.5 483V487M1080.5 483V487M1103.5 483V487M1126.5 483V487M1149.5 483V487M1173.5 483V487M1196.5 483V487M1219.5 483V487M1242.5 483V487M1266.5 483V487M1289.5 483V487M1312.5 483V487M1335.5 483V487M1359.5 483V487M1382.5 483V487M1405.5 483V487M1428.5 483V487M1452.5 483V487M1475.5 483V487" stroke="#0808e8" stroke-width="1" fill="none"/><path d="M251.5 161V495M251 161.5H1554M1553.5 161V495" stroke="#000" stroke-width="1" fill="none"/><rect x="251" y="495" width="1303" height="2" fill="#000"/><path d="M251.5 497V501M259.5 497V499M266.5 497V499M274.5 497V499M282.5 497V499M290.5 497V499M298.5 497V501M305.5 497V499M313.5 497V499M321.5 497V499M328.5 497V499M336.5 497V499M344.5 497V501M352.5 497V499M360.5 497V499M367.5 497V499M375.5 497V499M383.5 497V499M390.5 497V501M398.5 497V499M406.5 497V499M414.5 497V499M422.5 497V499M429.5 497V499M437.5 497V501M445.5 497V499M452.5 497V499M460.5 497V499M468.5 497V499M476.5 497V499M484.5 497V501M491.5 497V499M499.5 497V499M507.5 497V499M514.5 497V499M522.5 497V499M530.5 497V501M538.5 497V499M546.5 497V499M553.5 497V499M561.5 497V499M569.5 497V499M576.5 497V501M584.5 497V499M592.5 497V499M600.5 497V499M608.5 497V499M615.5 497V499M623.5 497V501M631.5 497V499M638.5 497V499M646.5 497V499M654.5 497V499M662.5 497V499M670.5 497V501M677.5 497V499M685.5 497V499M693.5 497V499M700.5 497V499M708.5 497V499M716.5 497V501M724.5 497V499M732.5 497V499M739.5 497V499M747.5 497V499M755.5 497V499M762.5 497V501M770.5 497V499M778.5 497V499M786.5 497V499M794.5 497V499M801.5 497V499M809.5 497V501M817.5 497V499M824.5 497V499M832.5 497V499M840.5 497V499M848.5 497V499M856.5 497V501M863.5 497V499M871.5 497V499M879.5 497V499M887.5 497V499M894.5 497V499M902.5 497V501M910.5 497V499M918.5 497V499M925.5 497V499M933.5 497V499M941.5 497V499M948.5 497V501M956.5 497V499M964.5 497V499M972.5 497V499M980.5 497V499M987.5 497V499M995.5 497V501M1003.5 497V499M1010.5 497V499M1018.5 497V499M1026.5 497V499M1034.5 497V499M1042.5 497V501M1049.5 497V499M1057.5 497V499M1065.5 497V499M1072.5 497V499M1080.5 497V499M1088.5 497V501M1096.5 497V499M1104.5 497V499M1111.5 497V499M1119.5 497V499M1127.5 497V499M1134.5 497V501M1142.5 497V499M1150.5 497V499M1158.5 497V499M1166.5 497V499M1173.5 497V499M1181.5 497V501M1189.5 497V499M1196.5 497V499M1204.5 497V499M1212.5 497V499M1220.5 497V499M1228.5 497V501M1235.5 497V499M1243.5 497V499M1251.5 497V499M1258.5 497V499M1266.5 497V499M1274.5 497V501M1282.5 497V499M1290.5 497V499M1297.5 497V499M1305.5 497V499M1313.5 497V499M1320.5 497V501M1328.5 497V499M1336.5 497V499M1344.5 497V499M1352.5 497V499M1359.5 497V499M1367.5 497V501M1375.5 497V499M1383.5 497V499M1390.5 497V499M1398.5 497V499M1406.5 497V499M1414.5 497V501M1421.5 497V499M1429.5 497V499M1437.5 497V499M1444.5 497V499M1452.5 497V499M1460.5 497V501M1468.5 497V499M1476.5 497V499M1483.5 497V499M1491.5 497V499M1499.5 497V499M1506.5 497V501M1514.5 497V499M1522.5 497V499M1530.5 497V499M1538.5 497V499M1545.5 497V499M1553.5 497V501" stroke="#000" stroke-width="1" fill="none"/></svg><div class="a tick" style="left:231px;top:504px;width:41px;height:12px;text-align:center">0</div><div class="a tick" style="left:278px;top:504px;width:41px;height:12px;text-align:center">0.05</div><div class="a tick" style="left:324px;top:504px;width:41px;height:12px;text-align:center">0.1</div><div class="a tick" style="left:370px;top:504px;width:41px;height:12px;text-align:center">0.15</div><div class="a tick" style="left:417px;top:504px;width:41px;height:12px;text-align:center">0.2</div><div class="a tick" style="left:464px;top:504px;width:41px;height:12px;text-align:center">0.25</div><div class="a tick" style="left:510px;top:504px;width:41px;height:12px;text-align:center">0.3</div><div class="a tick" style="left:556px;top:504px;width:41px;height:12px;text-align:center">0.35</div><div class="a tick" style="left:603px;top:504px;width:41px;height:12px;text-align:center">0.4</div><div class="a tick" style="left:650px;top:504px;width:41px;height:12px;text-align:center">0.45</div><div class="a tick" style="left:696px;top:504px;width:41px;height:12px;text-align:center">0.5</div><div class="a tick" style="left:742px;top:504px;width:41px;height:12px;text-align:center">0.55</div><div class="a tick" style="left:789px;top:504px;width:41px;height:12px;text-align:center">0.6</div><div class="a tick" style="left:836px;top:504px;width:41px;height:12px;text-align:center">0.65</div><div class="a tick" style="left:882px;top:504px;width:41px;height:12px;text-align:center">0.7</div><div class="a tick" style="left:928px;top:504px;width:41px;height:12px;text-align:center">0.75</div><div class="a tick" style="left:975px;top:504px;width:41px;height:12px;text-align:center">0.8</div><div class="a tick" style="left:1022px;top:504px;width:41px;height:12px;text-align:center">0.85</div><div class="a tick" style="left:1068px;top:504px;width:41px;height:12px;text-align:center">0.9</div><div class="a tick" style="left:1114px;top:504px;width:41px;height:12px;text-align:center">0.95</div><div class="a tick" style="left:1161px;top:504px;width:41px;height:12px;text-align:center">1</div><div class="a tick" style="left:1208px;top:504px;width:41px;height:12px;text-align:center">1.05</div><div class="a tick" style="left:1254px;top:504px;width:41px;height:12px;text-align:center">1.1</div><div class="a tick" style="left:1301px;top:504px;width:41px;height:12px;text-align:center">1.15</div><div class="a tick" style="left:1347px;top:504px;width:41px;height:12px;text-align:center">1.2</div><div class="a tick" style="left:1394px;top:504px;width:41px;height:12px;text-align:center">1.25</div><div class="a tick" style="left:1440px;top:504px;width:41px;height:12px;text-align:center">1.3</div><div class="a tick" style="left:1486px;top:504px;width:41px;height:12px;text-align:center">1.35</div><div class="a tick" style="left:1533px;top:504px;width:41px;height:12px;text-align:center">1.4</div><div class="a " style="left:862px;top:517px;width:80px;height:14px;text-align:center;font-size:12px;line-height:14px">时间&nbsp; S</div><div class="a tick" style="left:190px;top:164.75px;width:48px;height:12px;text-align:right">250</div><div class="a tick" style="left:190px;top:180.48px;width:48px;height:12px;text-align:right">225</div><div class="a tick" style="left:190px;top:196.21px;width:48px;height:12px;text-align:right">200</div><div class="a tick" style="left:190px;top:211.94px;width:48px;height:12px;text-align:right">175</div><div class="a tick" style="left:190px;top:227.67px;width:48px;height:12px;text-align:right">150</div><div class="a tick" style="left:190px;top:243.4px;width:48px;height:12px;text-align:right">125</div><div class="a tick" style="left:190px;top:259.13px;width:48px;height:12px;text-align:right">100</div><div class="a tick" style="left:190px;top:274.86px;width:48px;height:12px;text-align:right">75</div><div class="a tick" style="left:190px;top:290.59px;width:48px;height:12px;text-align:right">50</div><div class="a tick" style="left:190px;top:306.32px;width:48px;height:12px;text-align:right">25</div><div class="a tick" style="left:190px;top:337.78px;width:48px;height:12px;text-align:right">-25</div><div class="a tick" style="left:190px;top:353.51px;width:48px;height:12px;text-align:right">-50</div><div class="a tick" style="left:190px;top:369.24px;width:48px;height:12px;text-align:right">-75</div><div class="a tick" style="left:190px;top:384.97px;width:48px;height:12px;text-align:right">-100</div><div class="a tick" style="left:190px;top:400.7px;width:48px;height:12px;text-align:right">-125</div><div class="a tick" style="left:190px;top:416.43px;width:48px;height:12px;text-align:right">-150</div><div class="a tick" style="left:190px;top:432.16px;width:48px;height:12px;text-align:right">-175</div><div class="a tick" style="left:190px;top:447.89px;width:48px;height:12px;text-align:right">-200</div><div class="a tick" style="left:190px;top:463.62px;width:48px;height:12px;text-align:right">-225</div><div class="a tick" style="left:190px;top:479.35px;width:48px;height:12px;text-align:right">-250</div><div class="a " style="left:0px;top:0px;left:209px;top:328px;font-size:12px;line-height:14px;transform:translate(-50%,-50%) rotate(-90deg)">载荷 N</div><div class="a " style="left:153px;top:547px;width:1479px;height:22px;background:#fff;border-bottom:1px solid #6a6a6a"></div><div class="a " style="left:157px;top:551.5px;font-weight:bold;font-size:13.330px;line-height:16px;letter-spacing:.7px">时间曲线</div><div class="a " style="left:162px;top:569px;width:1460.5px;height:437.5px;background:#fff"></div><div class="a " style="left:1597px;top:569px;width:1px;height:437.5px;background:#c4c4c4"></div><div class="a " style="left:1523px;top:570px;width:99px;height:25px;background:#84f088;border-radius:13px"></div><div class="a " style="left:1598px;top:569.7px;width:25px;height:25px;background:#fff;border-radius:50%"></div><div class="a " style="left:1525px;top:575px;color:#e03800;font-size:12px;line-height:14px">曲线</div><div class="a " style="left:1599px;top:575px;color:#000;font-size:12px;line-height:14px">刷新</div><div class="a " style="left:1598px;top:600px;width:25px;height:12.5px;background:#93b3de"></div><div class="a " style="left:1602.2px;top:598.2px;color:#fff;font-weight:bold;font-size:12px;line-height:16px;letter-spacing:-1px;-webkit-text-stroke:.6px #fff">&lt;·&gt;</div><div class="a " style="left:1606px;top:617px;width:13px;height:13px;border:1px solid #333;background:#fff"></div><div class="a " style="left:1606px;top:635px;width:13px;height:13px;border:1px solid #333;background:#fff"></div><div class="a " style="left:541px;top:577px;width:600px;height:16px;text-align:center;font-weight:bold;font-size:13.330px;line-height:16px;color:#0c4a80;letter-spacing:-.25px">载荷、位移<span style="letter-spacing:1.500px">——</span>时间</div><svg width="1920" height="1040" viewBox="0 0 1920 1040" shape-rendering="crispEdges"><g shape-rendering="auto"><g fill="none" stroke="#000" stroke-width="1.200"><rect x="1515.2" y="553.5" width="16.500" height="8.100"/><path d="M1518.5 553.5V549.9M1529.4 553.5V549.9" /><path d="M1518.5 549.7H1529.4" stroke="#a8e0a8"/><rect x="1518.5" y="559.6" width="10.900" height="6" fill="#fff"/><path d="M1518.5 555.2H1529.4"/></g><g fill="none" stroke="#000" stroke-width="1.200"><rect x="1563.5" y="550.4" width="8.100" height="16.300"/><path d="M1565.3 553.5V564.5M1569.3 553.5V564.5" stroke-width="1"/><path d="M1558.8 553.5H1563.5M1571.6 553.5H1575.8M1558.8 564.6H1563.5M1571.6 564.6H1575.8"/><path d="M1558.8 553.5V564.6M1575.8 553.5V564.6" stroke="#c0e4b8" stroke-width="1"/></g><path d="M1600.3 549.4L1617.5 565.6M1617.5 549.4L1600.3 565.6" stroke="#000" stroke-width="1.300"/><path d="M1607.7 641.3l3 2.600l7.400-5.800" fill="none" stroke="#333" stroke-width="1.100"/></g><path d="M279.5 601V970M326.5 601V970M373.5 601V970M420.5 601V970M467.5 601V970M514.5 601V970M561.5 601V970M608.5 601V970M655.5 601V970M702.5 601V970M749.5 601V970M796.5 601V970M843.5 601V970M890.5 601V970M937.5 601V970M984.5 601V970M1031.5 601V970M1078.5 601V970M1125.5 601V970M1172.5 601V970M1219.5 601V970M1266.5 601V970M1313.5 601V970M1360.5 601V970M1407.5 601V970M1454.5 601V970M1501.5 601V970" stroke="#787878" stroke-width="1" stroke-dasharray="3 3" fill="none"/><path d="M234 625.5H1545M234 648.5H1545M234 671.5H1545M234 694.5H1545M234 718.5H1545M234 741.5H1545M234 764.5H1545M234 787.5H1545M234 810.5H1545M234 833.5H1545M234 856.5H1545M234 879.5H1545M234 902.5H1545M234 925.5H1545M234 949.5H1545M234 785.5H1545" stroke="#787878" stroke-width="1" stroke-dasharray="3 3" fill="none"/><path d="M234.5 718V733M235.5 689V718M236.5 660V689M237.5 637V660M238.5 621V637M239.5 612V621M240.5 621V637M241.5 637V660M242.5 660V689M243.5 689V718M244.5 718V759M245.5 759V813M246.5 813V861M247.5 861V905M248.5 905V932M249.5 932V943M250.5 943V955M251.5 952V961M252.5 935V952M253.5 905V935M254.5 861V905M255.5 822V861M256.5 786V822M257.5 750V786M258.5 711V750M259.5 667V711M260.5 640V667M261.5 629V640M262.5 618V629M263.5 612V621M264.5 621V637M265.5 637V667M266.5 667V711M267.5 711V750M268.5 750V786M269.5 786V822M270.5 822V861M271.5 861V905M272.5 905V935M273.5 935V952M274.5 952V961M275.5 944V955M276.5 932V944M277.5 905V932M278.5 861V905M279.5 813V861M280.5 759V813M281.5 718V759M282.5 689V718M283.5 660V689M284.5 637V660M285.5 621V637M286.5 612V621M287.5 621V637M288.5 637V660M289.5 660V689M290.5 689V718M291.5 718V759M292.5 759V813M293.5 813V861M294.5 861V905M295.5 905V932M296.5 932V943M297.5 943V955M298.5 952V961M299.5 935V952M300.5 905V935M301.5 861V905M302.5 822V861M303.5 786V822M304.5 750V786M305.5 711V750M306.5 667V711M307.5 640V667M308.5 629V640M309.5 618V629M310.5 612V621M311.5 621V637M312.5 637V667M313.5 667V711M314.5 711V750M315.5 750V786M316.5 786V822M317.5 822V861M318.5 861V905M319.5 905V935M320.5 935V952M321.5 952V961M322.5 944V955M323.5 932V944M324.5 905V932M325.5 861V905M326.5 813V861M327.5 759V813M328.5 718V759M329.5 689V718M330.5 660V689M331.5 637V660M332.5 621V637M333.5 612V621M334.5 621V637M335.5 637V660M336.5 660V689M337.5 689V718M338.5 718V759M339.5 759V813M340.5 813V861M341.5 861V905M342.5 905V932M343.5 932V943M344.5 943V955M345.5 952V961M346.5 935V952M347.5 905V935M348.5 861V905M349.5 822V861M350.5 786V822M351.5 750V786M352.5 711V750M353.5 667V711M354.5 640V667M355.5 629V640M356.5 618V629M357.5 612V621M358.5 621V637M359.5 637V667M360.5 667V711M361.5 711V750M362.5 750V786M363.5 786V822M364.5 822V861M365.5 861V905M366.5 905V935M367.5 935V952M368.5 952V961M369.5 944V955M370.5 932V944M371.5 905V932M372.5 861V905M373.5 813V861M374.5 759V813M375.5 718V759M376.5 689V718M377.5 660V689M378.5 637V660M379.5 621V637M380.5 612V621M381.5 621V637M382.5 637V660M383.5 660V689M384.5 689V718M385.5 718V759M386.5 759V813M387.5 813V861M388.5 861V905M389.5 905V932M390.5 932V943M391.5 943V955M392.5 952V961M393.5 935V952M394.5 905V935M395.5 861V905M396.5 822V861M397.5 786V822M398.5 750V786M399.5 711V750M400.5 667V711M401.5 640V667M402.5 629V640M403.5 618V629M404.5 612V621M405.5 621V637M406.5 637V667M407.5 667V711M408.5 711V750M409.5 750V786M410.5 786V822M411.5 822V861M412.5 861V905M413.5 905V935M414.5 935V952M415.5 952V961M416.5 944V955M417.5 932V944M418.5 905V932M419.5 861V905M420.5 813V861M421.5 759V813M422.5 718V759M423.5 689V718M424.5 660V689M425.5 637V660M426.5 621V637M427.5 612V621M428.5 621V637M429.5 637V660M430.5 660V689M431.5 689V718M432.5 718V759M433.5 759V813M434.5 813V861M435.5 861V905M436.5 905V932M437.5 932V943M438.5 943V955M439.5 952V961M440.5 935V952M441.5 905V935M442.5 861V905M443.5 822V861M444.5 786V822M445.5 750V786M446.5 711V750M447.5 667V711M448.5 640V667M449.5 629V640M450.5 618V629M451.5 612V621M452.5 621V637M453.5 637V667M454.5 667V711M455.5 711V750M456.5 750V786M457.5 786V822M458.5 822V861M459.5 861V905M460.5 905V935M461.5 935V952M462.5 952V961M463.5 944V955M464.5 932V944M465.5 905V932M466.5 861V905M467.5 813V861M468.5 759V813M469.5 718V759M470.5 689V718M471.5 660V689M472.5 637V660M473.5 621V637M474.5 612V621M475.5 621V637M476.5 637V660M477.5 660V689M478.5 689V718M479.5 718V759M480.5 759V813M481.5 813V861M482.5 861V905M483.5 905V932M484.5 932V943M485.5 943V955M486.5 952V961M487.5 935V952M488.5 905V935M489.5 861V905M490.5 822V861M491.5 786V822M492.5 750V786M493.5 711V750M494.5 667V711M495.5 640V667M496.5 629V640M497.5 618V629M498.5 612V621M499.5 621V637M500.5 637V667M501.5 667V711M502.5 711V750M503.5 750V786M504.5 786V822M505.5 822V861M506.5 861V905M507.5 905V935M508.5 935V952M509.5 952V961M510.5 944V955M511.5 932V944M512.5 905V932M513.5 861V905M514.5 813V861M515.5 759V813M516.5 718V759M517.5 689V718M518.5 660V689M519.5 637V660M520.5 621V637M521.5 612V621M522.5 621V637M523.5 637V660M524.5 660V689M525.5 689V718M526.5 718V759M527.5 759V813M528.5 813V861M529.5 861V905M530.5 905V932M531.5 932V943M532.5 943V955M533.5 952V961M534.5 935V952M535.5 905V935M536.5 861V905M537.5 822V861M538.5 786V822M539.5 750V786M540.5 711V750M541.5 667V711M542.5 640V667M543.5 629V640M544.5 618V629M545.5 612V621M546.5 621V637M547.5 637V667M548.5 667V711M549.5 711V750M550.5 750V786M551.5 786V822M552.5 822V861M553.5 861V905M554.5 905V935M555.5 935V952M556.5 952V961M557.5 944V955M558.5 932V944M559.5 905V932M560.5 861V905M561.5 813V861M562.5 759V813M563.5 718V759M564.5 689V718M565.5 660V689M566.5 637V660M567.5 621V637M568.5 612V621M569.5 621V637M570.5 637V660M571.5 660V689M572.5 689V718M573.5 718V759M574.5 759V813M575.5 813V861M576.5 861V905M577.5 905V932M578.5 932V943M579.5 943V955M580.5 952V961M581.5 935V952M582.5 905V935M583.5 861V905M584.5 822V861M585.5 786V822M586.5 750V786M587.5 711V750M588.5 667V711M589.5 640V667M590.5 629V640M591.5 618V629M592.5 612V621M593.5 621V637M594.5 637V667M595.5 667V711M596.5 711V750M597.5 750V786M598.5 786V822M599.5 822V861M600.5 861V905M601.5 905V935M602.5 935V952M603.5 952V961M604.5 944V955M605.5 932V944M606.5 905V932M607.5 861V905M608.5 813V861M609.5 759V813M610.5 718V759M611.5 689V718M612.5 660V689M613.5 637V660M614.5 621V637M615.5 612V621M616.5 621V637M617.5 637V660M618.5 660V689M619.5 689V718M620.5 718V759M621.5 759V813M622.5 813V861M623.5 861V905M624.5 905V932M625.5 932V943M626.5 943V955M627.5 952V961M628.5 935V952M629.5 905V935M630.5 861V905M631.5 822V861M632.5 786V822M633.5 750V786M634.5 711V750M635.5 667V711M636.5 640V667M637.5 629V640M638.5 618V629M639.5 612V621M640.5 621V637M641.5 637V667M642.5 667V711M643.5 711V750M644.5 750V786M645.5 786V822M646.5 822V861M647.5 861V905M648.5 905V935M649.5 935V952M650.5 952V961M651.5 944V955M652.5 932V944M653.5 905V932M654.5 861V905M655.5 813V861M656.5 759V813M657.5 718V759M658.5 689V718M659.5 660V689M660.5 637V660M661.5 621V637M662.5 612V621M663.5 621V637M664.5 637V660M665.5 660V689M666.5 689V718M667.5 718V759M668.5 759V813M669.5 813V861M670.5 861V905M671.5 905V932M672.5 932V943M673.5 943V955M674.5 952V961M675.5 935V952M676.5 905V935M677.5 861V905M678.5 822V861M679.5 786V822M680.5 750V786M681.5 711V750M682.5 667V711M683.5 640V667M684.5 629V640M685.5 618V629M686.5 612V621M687.5 621V637M688.5 637V667M689.5 667V711M690.5 711V750M691.5 750V786M692.5 786V822M693.5 822V861M694.5 861V905M695.5 905V935M696.5 935V952M697.5 952V961M698.5 944V955M699.5 932V944M700.5 905V932M701.5 861V905M702.5 813V861M703.5 759V813M704.5 718V759M705.5 689V718M706.5 660V689M707.5 637V660M708.5 621V637M709.5 612V621M710.5 621V637M711.5 637V660M712.5 660V689M713.5 689V718M714.5 718V759M715.5 759V813M716.5 813V861M717.5 861V905M718.5 905V932M719.5 932V943M720.5 943V955M721.5 952V961M722.5 935V952M723.5 905V935M724.5 861V905M725.5 822V861M726.5 786V822M727.5 750V786M728.5 711V750M729.5 667V711M730.5 640V667M731.5 629V640M732.5 618V629M733.5 612V621M734.5 621V637M735.5 637V667M736.5 667V711M737.5 711V750M738.5 750V786M739.5 786V822M740.5 822V861M741.5 861V905M742.5 905V935M743.5 935V952M744.5 952V961M745.5 944V955M746.5 932V944M747.5 905V932M748.5 861V905M749.5 813V861M750.5 759V813M751.5 718V759M752.5 689V718M753.5 660V689M754.5 637V660M755.5 621V637M756.5 612V621M757.5 621V637M758.5 637V660M759.5 660V689M760.5 689V718M761.5 718V759M762.5 759V813M763.5 813V861M764.5 861V905M765.5 905V932M766.5 932V943M767.5 943V955M768.5 952V961M769.5 935V952M770.5 905V935M771.5 861V905M772.5 822V861M773.5 786V822M774.5 750V786M775.5 711V750M776.5 667V711M777.5 640V667M778.5 629V640M779.5 618V629M780.5 612V621M781.5 621V637M782.5 637V667M783.5 667V711M784.5 711V750M785.5 750V786M786.5 786V822M787.5 822V861M788.5 861V905M789.5 905V935M790.5 935V952M791.5 952V961M792.5 944V955M793.5 932V944M794.5 905V932M795.5 861V905M796.5 813V861M797.5 759V813M798.5 718V759M799.5 689V718M800.5 660V689M801.5 637V660M802.5 621V637M803.5 612V621M804.5 621V637M805.5 637V660M806.5 660V689M807.5 689V718M808.5 718V759M809.5 759V813M810.5 813V861M811.5 861V905M812.5 905V932M813.5 932V943M814.5 943V955M815.5 952V961M816.5 935V952M817.5 905V935M818.5 861V905M819.5 822V861M820.5 786V822M821.5 750V786M822.5 711V750M823.5 667V711M824.5 640V667M825.5 629V640M826.5 618V629M827.5 612V621M828.5 621V637M829.5 637V667M830.5 667V711M831.5 711V750M832.5 750V786M833.5 786V822M834.5 822V861M835.5 861V905M836.5 905V935M837.5 935V952M838.5 952V961M839.5 944V955M840.5 932V944M841.5 905V932M842.5 861V905M843.5 813V861M844.5 759V813M845.5 718V759M846.5 689V718M847.5 660V689M848.5 637V660M849.5 621V637M850.5 612V621M851.5 621V637M852.5 637V660M853.5 660V689M854.5 689V718M855.5 718V759M856.5 759V813M857.5 813V861M858.5 861V905M859.5 905V932M860.5 932V943M861.5 943V955M862.5 952V961M863.5 935V952M864.5 905V935M865.5 861V905M866.5 822V861M867.5 786V822M868.5 750V786M869.5 711V750M870.5 667V711M871.5 640V667M872.5 629V640M873.5 618V629M874.5 612V621M875.5 621V637M876.5 637V667M877.5 667V711M878.5 711V750M879.5 750V786M880.5 786V822M881.5 822V861M882.5 861V905M883.5 905V935M884.5 935V952M885.5 952V961M886.5 944V955M887.5 932V944M888.5 905V932M889.5 861V905M890.5 813V861M891.5 759V813M892.5 718V759M893.5 689V718M894.5 660V689M895.5 637V660M896.5 621V637M897.5 612V621M898.5 621V637M899.5 637V660M900.5 660V689M901.5 689V718M902.5 718V759M903.5 759V813M904.5 813V861M905.5 861V905M906.5 905V932M907.5 932V943M908.5 943V955M909.5 952V961M910.5 935V952M911.5 905V935M912.5 861V905M913.5 822V861M914.5 786V822M915.5 750V786M916.5 711V750M917.5 667V711M918.5 640V667M919.5 629V640M920.5 618V629M921.5 612V621M922.5 621V637M923.5 637V667M924.5 667V711M925.5 711V750M926.5 750V786M927.5 786V822M928.5 822V861M929.5 861V905M930.5 905V935M931.5 935V952M932.5 952V961M933.5 944V955M934.5 932V944M935.5 905V932M936.5 861V905M937.5 813V861M938.5 759V813M939.5 718V759M940.5 689V718M941.5 660V689M942.5 637V660M943.5 621V637M944.5 612V621M945.5 621V637M946.5 637V660M947.5 660V689M948.5 689V718M949.5 718V759M950.5 759V813M951.5 813V861M952.5 861V905M953.5 905V932M954.5 932V943M955.5 943V955M956.5 952V961M957.5 935V952M958.5 905V935M959.5 861V905M960.5 822V861M961.5 786V822M962.5 750V786M963.5 711V750M964.5 667V711M965.5 640V667M966.5 629V640M967.5 618V629M968.5 612V621M969.5 621V637M970.5 637V667M971.5 667V711M972.5 711V750M973.5 750V786M974.5 786V822M975.5 822V861M976.5 861V905M977.5 905V935M978.5 935V952M979.5 952V961M980.5 944V955M981.5 932V944M982.5 905V932M983.5 861V905M984.5 813V861M985.5 759V813M986.5 718V759M987.5 689V718M988.5 660V689M989.5 637V660M990.5 621V637M991.5 612V621M992.5 621V637M993.5 637V660M994.5 660V689M995.5 689V718M996.5 718V759M997.5 759V813M998.5 813V861M999.5 861V905M1000.5 905V932M1001.5 932V943M1002.5 943V955M1003.5 952V961M1004.5 935V952M1005.5 905V935M1006.5 861V905M1007.5 822V861M1008.5 786V822M1009.5 750V786M1010.5 711V750M1011.5 667V711M1012.5 640V667M1013.5 629V640M1014.5 618V629M1015.5 612V621M1016.5 621V637M1017.5 637V667M1018.5 667V711M1019.5 711V750M1020.5 750V786M1021.5 786V822M1022.5 822V861M1023.5 861V905M1024.5 905V935M1025.5 935V952M1026.5 952V961M1027.5 944V955M1028.5 932V944M1029.5 905V932M1030.5 861V905M1031.5 813V861M1032.5 759V813M1033.5 718V759M1034.5 689V718M1035.5 660V689M1036.5 637V660M1037.5 621V637M1038.5 612V621M1039.5 621V637M1040.5 637V660M1041.5 660V689M1042.5 689V718M1043.5 718V759M1044.5 759V813M1045.5 813V861M1046.5 861V905M1047.5 905V932M1048.5 932V943M1049.5 943V955M1050.5 952V961M1051.5 935V952M1052.5 905V935M1053.5 861V905M1054.5 822V861M1055.5 786V822M1056.5 750V786M1057.5 711V750M1058.5 667V711M1059.5 640V667M1060.5 629V640M1061.5 618V629M1062.5 612V621M1063.5 621V637M1064.5 637V667M1065.5 667V711M1066.5 711V750M1067.5 750V786M1068.5 786V822M1069.5 822V861M1070.5 861V905M1071.5 905V935M1072.5 935V952M1073.5 952V961M1074.5 944V955M1075.5 932V944M1076.5 905V932M1077.5 861V905M1078.5 813V861M1079.5 759V813M1080.5 718V759M1081.5 689V718M1082.5 660V689M1083.5 637V660M1084.5 621V637M1085.5 612V621M1086.5 621V637M1087.5 637V660M1088.5 660V689M1089.5 689V718M1090.5 718V759M1091.5 759V813M1092.5 813V861M1093.5 861V905M1094.5 905V932M1095.5 932V943M1096.5 943V955M1097.5 952V961M1098.5 935V952M1099.5 905V935M1100.5 861V905M1101.5 822V861M1102.5 786V822M1103.5 750V786M1104.5 711V750M1105.5 667V711M1106.5 640V667M1107.5 629V640M1108.5 618V629M1109.5 612V621M1110.5 621V637M1111.5 637V667M1112.5 667V711M1113.5 711V750M1114.5 750V786M1115.5 786V822M1116.5 822V861M1117.5 861V905M1118.5 905V935M1119.5 935V952M1120.5 952V961M1121.5 944V955M1122.5 932V944M1123.5 905V932M1124.5 861V905M1125.5 813V861M1126.5 759V813M1127.5 718V759M1128.5 689V718M1129.5 660V689M1130.5 637V660M1131.5 621V637M1132.5 612V621M1133.5 621V637M1134.5 637V660M1135.5 660V689M1136.5 689V718M1137.5 718V759M1138.5 759V813M1139.5 813V861M1140.5 861V905M1141.5 905V932M1142.5 932V943M1143.5 943V955M1144.5 952V961M1145.5 935V952M1146.5 905V935M1147.5 861V905M1148.5 822V861M1149.5 786V822M1150.5 750V786M1151.5 711V750M1152.5 667V711M1153.5 640V667M1154.5 629V640M1155.5 618V629M1156.5 612V621M1157.5 621V637M1158.5 637V667M1159.5 667V711M1160.5 711V750M1161.5 750V786M1162.5 786V822M1163.5 822V861M1164.5 861V905M1165.5 905V935M1166.5 935V952M1167.5 952V961M1168.5 944V955M1169.5 932V944M1170.5 905V932M1171.5 861V905M1172.5 813V861M1173.5 759V813M1174.5 718V759M1175.5 689V718M1176.5 660V689M1177.5 637V660M1178.5 621V637M1179.5 612V621M1180.5 621V637M1181.5 637V660M1182.5 660V689M1183.5 689V718M1184.5 718V759M1185.5 759V813M1186.5 813V861M1187.5 861V905M1188.5 905V932M1189.5 932V943M1190.5 943V955M1191.5 952V961M1192.5 935V952M1193.5 905V935M1194.5 861V905M1195.5 822V861M1196.5 786V822M1197.5 750V786M1198.5 711V750M1199.5 667V711M1200.5 640V667M1201.5 629V640M1202.5 618V629M1203.5 612V621M1204.5 621V637M1205.5 637V667M1206.5 667V711M1207.5 711V750M1208.5 750V786M1209.5 786V822M1210.5 822V861M1211.5 861V905M1212.5 905V935M1213.5 935V952M1214.5 952V961M1215.5 944V955M1216.5 932V944M1217.5 905V932M1218.5 861V905M1219.5 813V861M1220.5 759V813M1221.5 718V759M1222.5 689V718M1223.5 660V689M1224.5 637V660M1225.5 621V637M1226.5 612V621M1227.5 621V637M1228.5 637V660M1229.5 660V689M1230.5 689V718M1231.5 718V759M1232.5 759V813M1233.5 813V861M1234.5 861V905M1235.5 905V932M1236.5 932V943M1237.5 943V955M1238.5 952V961M1239.5 935V952M1240.5 905V935M1241.5 861V905M1242.5 822V861M1243.5 786V822M1244.5 750V786M1245.5 711V750M1246.5 667V711M1247.5 640V667M1248.5 629V640M1249.5 618V629M1250.5 612V621M1251.5 621V637M1252.5 637V667M1253.5 667V711M1254.5 711V750M1255.5 750V786M1256.5 786V822M1257.5 822V861M1258.5 861V905M1259.5 905V935M1260.5 935V952M1261.5 952V961M1262.5 944V955M1263.5 932V944M1264.5 905V932M1265.5 861V905M1266.5 813V861M1267.5 759V813M1268.5 718V759M1269.5 689V718M1270.5 660V689M1271.5 637V660M1272.5 621V637M1273.5 612V621M1274.5 621V637M1275.5 637V660M1276.5 660V689M1277.5 689V718M1278.5 718V759M1279.5 759V813M1280.5 813V861M1281.5 861V905M1282.5 905V932M1283.5 932V943M1284.5 943V955M1285.5 952V961M1286.5 935V952M1287.5 905V935M1288.5 861V905M1289.5 822V861M1290.5 786V822M1291.5 750V786M1292.5 711V750M1293.5 667V711M1294.5 640V667M1295.5 629V640M1296.5 618V629M1297.5 612V621M1298.5 621V637M1299.5 637V667M1300.5 667V711M1301.5 711V750M1302.5 750V786M1303.5 786V822M1304.5 822V861M1305.5 861V905M1306.5 905V935M1307.5 935V952M1308.5 952V961M1309.5 944V955M1310.5 932V944M1311.5 905V932M1312.5 861V905M1313.5 813V861M1314.5 759V813M1315.5 718V759M1316.5 689V718M1317.5 660V689M1318.5 637V660M1319.5 621V637M1320.5 612V621M1321.5 621V637M1322.5 637V660M1323.5 660V689M1324.5 689V718M1325.5 718V759M1326.5 759V813M1327.5 813V861M1328.5 861V905M1329.5 905V932M1330.5 932V943M1331.5 943V955M1332.5 952V961M1333.5 935V952M1334.5 905V935M1335.5 861V905M1336.5 822V861M1337.5 786V822M1338.5 750V786M1339.5 711V750M1340.5 667V711M1341.5 640V667M1342.5 629V640M1343.5 618V629M1344.5 612V621M1345.5 621V637M1346.5 637V667M1347.5 667V711M1348.5 711V750M1349.5 750V786M1350.5 786V822M1351.5 822V861M1352.5 861V905M1353.5 905V935M1354.5 935V952M1355.5 952V961M1356.5 944V955M1357.5 932V944M1358.5 905V932M1359.5 861V905M1360.5 813V861M1361.5 759V813M1362.5 718V759M1363.5 689V718M1364.5 660V689M1365.5 637V660M1366.5 621V637M1367.5 612V621M1368.5 621V637M1369.5 637V660M1370.5 660V689M1371.5 689V718M1372.5 718V759M1373.5 759V813M1374.5 813V861M1375.5 861V905M1376.5 905V932M1377.5 932V943M1378.5 943V955M1379.5 952V961M1380.5 935V952M1381.5 905V935M1382.5 861V905M1383.5 822V861M1384.5 786V822M1385.5 750V786M1386.5 711V750M1387.5 667V711M1388.5 640V667M1389.5 629V640M1390.5 618V629M1391.5 612V621M1392.5 621V637M1393.5 637V667M1394.5 667V711M1395.5 711V750M1396.5 750V786M1397.5 786V822M1398.5 822V861M1399.5 861V905M1400.5 905V935M1401.5 935V952M1402.5 952V961M1403.5 944V955M1404.5 932V944M1405.5 905V932M1406.5 861V905M1407.5 813V861M1408.5 759V813M1409.5 718V759M1410.5 689V718M1411.5 660V689M1412.5 637V660M1413.5 621V637M1414.5 612V621M1415.5 621V637M1416.5 637V660M1417.5 660V689M1418.5 689V718M1419.5 718V759M1420.5 759V813M1421.5 813V861M1422.5 861V905M1423.5 905V932M1424.5 932V943M1425.5 943V955M1426.5 952V961M1427.5 935V952M1428.5 905V935M1429.5 861V905M1430.5 822V861M1431.5 786V822M1432.5 750V786M1433.5 711V750M1434.5 667V711M1435.5 640V667M1436.5 629V640M1437.5 618V629M1438.5 612V621M1439.5 621V637M1440.5 637V667M1441.5 667V711M1442.5 711V750M1443.5 750V786M1444.5 786V822M1445.5 822V861M1446.5 861V905M1447.5 905V935M1448.5 935V952M1449.5 952V961M1450.5 944V955M1451.5 932V944M1452.5 905V932M1453.5 861V905M1454.5 813V861M1455.5 759V813M1456.5 718V759M1457.5 689V718M1458.5 660V689M1459.5 637V660M1460.5 621V637M1461.5 612V621M1462.5 621V637M1463.5 637V660M1464.5 660V689M1465.5 689V718M1466.5 718V759M1467.5 759V813M1468.5 813V861M1469.5 861V905M1470.5 905V932M1471.5 932V943M1472.5 943V955M1473.5 952V961M1474.5 935V952M1475.5 905V935M1476.5 861V905M1477.5 822V861M1478.5 786V822M1479.5 750V786M1480.5 711V750M1481.5 667V711M1482.5 639V667M1483.5 626V639M1484.5 619V626" stroke="#14146e" stroke-width="1" fill="none"/><path d="M1549 611.5H1551M1549 616.5H1551M1549 620.5H1551M1549 625.5H1553M1549 630.5H1551M1549 634.5H1551M1549 639.5H1551M1549 644.5H1551M1549 648.5H1553M1549 653.5H1551M1549 657.5H1551M1549 662.5H1551M1549 667.5H1551M1549 671.5H1553M1549 676.5H1551M1549 681.5H1551M1549 685.5H1551M1549 690.5H1551M1549 694.5H1553M1549 699.5H1551M1549 704.5H1551M1549 708.5H1551M1549 713.5H1551M1549 718.5H1553M1549 722.5H1551M1549 727.5H1551M1549 731.5H1551M1549 736.5H1551M1549 741.5H1553M1549 745.5H1551M1549 750.5H1551M1549 754.5H1551M1549 759.5H1551M1549 764.5H1553M1549 768.5H1551M1549 773.5H1551M1549 778.5H1551M1549 782.5H1551M1549 787.5H1553M1549 791.5H1551M1549 796.5H1551M1549 801.5H1551M1549 805.5H1551M1549 810.5H1553M1549 815.5H1551M1549 819.5H1551M1549 824.5H1551M1549 828.5H1551M1549 833.5H1553M1549 838.5H1551M1549 842.5H1551M1549 847.5H1551M1549 851.5H1551M1549 856.5H1553M1549 861.5H1551M1549 865.5H1551M1549 870.5H1551M1549 875.5H1551M1549 879.5H1553M1549 884.5H1551M1549 888.5H1551M1549 893.5H1551M1549 898.5H1551M1549 902.5H1553M1549 907.5H1551M1549 912.5H1551M1549 916.5H1551M1549 921.5H1551M1549 925.5H1553M1549 930.5H1551M1549 935.5H1551M1549 939.5H1551M1549 944.5H1551M1549 949.5H1553M1549 953.5H1551M1549 958.5H1551" stroke="#18188c" stroke-width="1" fill="none"/><path d="M251.5 957V961M274.5 957V961M298.5 957V961M321.5 957V961M345.5 957V961M368.5 957V961M392.5 957V961M415.5 957V961M439.5 957V961M462.5 957V961M486.5 957V961M509.5 957V961M533.5 957V961M556.5 957V961M580.5 957V961M603.5 957V961M627.5 957V961M650.5 957V961M674.5 957V961M697.5 957V961M721.5 957V961M744.5 957V961M768.5 957V961M791.5 957V961M815.5 957V961M838.5 957V961M862.5 957V961M885.5 957V961M909.5 957V961M932.5 957V961M956.5 957V961M979.5 957V961M1003.5 957V961M1026.5 957V961M1050.5 957V961M1073.5 957V961M1097.5 957V961M1120.5 957V961M1144.5 957V961M1167.5 957V961M1191.5 957V961M1214.5 957V961M1238.5 957V961M1261.5 957V961M1285.5 957V961M1308.5 957V961M1332.5 957V961M1355.5 957V961M1379.5 957V961M1402.5 957V961M1426.5 957V961M1449.5 957V961M1473.5 957V961" stroke="#0808e8" stroke-width="1" fill="none"/><path d="M232.5 600V970M232 600.5H1549M1548.5 600V970" stroke="#000" stroke-width="1" fill="none"/><rect x="231" y="611" width="2.400" height="350" fill="#a8302c" shape-rendering="auto"/><path d="M228 785.500H231" stroke="#606060"/><rect x="1547" y="611" width="2" height="350" fill="#18188c"/><rect x="232" y="970" width="1317" height="2" fill="#000"/><path d="M232.5 972V976M240.5 972V974M248.5 972V974M256.5 972V974M263.5 972V974M271.5 972V974M279.5 972V976M287.5 972V974M295.5 972V974M302.5 972V974M310.5 972V974M318.5 972V974M326.5 972V976M334.5 972V974M342.5 972V974M350.5 972V974M357.5 972V974M365.5 972V974M373.5 972V976M381.5 972V974M389.5 972V974M396.5 972V974M404.5 972V974M412.5 972V974M420.5 972V976M428.5 972V974M436.5 972V974M444.5 972V974M451.5 972V974M459.5 972V974M467.5 972V976M475.5 972V974M483.5 972V974M491.5 972V974M498.5 972V974M506.5 972V974M514.5 972V976M522.5 972V974M530.5 972V974M538.5 972V974M545.5 972V974M553.5 972V974M561.5 972V976M569.5 972V974M577.5 972V974M584.5 972V974M592.5 972V974M600.5 972V974M608.5 972V976M616.5 972V974M624.5 972V974M632.5 972V974M639.5 972V974M647.5 972V974M655.5 972V976M663.5 972V974M671.5 972V974M678.5 972V974M686.5 972V974M694.5 972V974M702.5 972V976M710.5 972V974M718.5 972V974M726.5 972V974M733.5 972V974M741.5 972V974M749.5 972V976M757.5 972V974M765.5 972V974M772.5 972V974M780.5 972V974M788.5 972V974M796.5 972V976M804.5 972V974M812.5 972V974M820.5 972V974M827.5 972V974M835.5 972V974M843.5 972V976M851.5 972V974M859.5 972V974M866.5 972V974M874.5 972V974M882.5 972V974M890.5 972V976M898.5 972V974M906.5 972V974M914.5 972V974M921.5 972V974M929.5 972V974M937.5 972V976M945.5 972V974M953.5 972V974M960.5 972V974M968.5 972V974M976.5 972V974M984.5 972V976M992.5 972V974M1000.5 972V974M1008.5 972V974M1015.5 972V974M1023.5 972V974M1031.5 972V976M1039.5 972V974M1047.5 972V974M1054.5 972V974M1062.5 972V974M1070.5 972V974M1078.5 972V976M1086.5 972V974M1094.5 972V974M1102.5 972V974M1109.5 972V974M1117.5 972V974M1125.5 972V976M1133.5 972V974M1141.5 972V974M1148.5 972V974M1156.5 972V974M1164.5 972V974M1172.5 972V976M1180.5 972V974M1188.5 972V974M1196.5 972V974M1203.5 972V974M1211.5 972V974M1219.5 972V976M1227.5 972V974M1235.5 972V974M1242.5 972V974M1250.5 972V974M1258.5 972V974M1266.5 972V976M1274.5 972V974M1282.5 972V974M1290.5 972V974M1297.5 972V974M1305.5 972V974M1313.5 972V976M1321.5 972V974M1329.5 972V974M1337.5 972V974M1344.5 972V974M1352.5 972V974M1360.5 972V976M1368.5 972V974M1376.5 972V974M1384.5 972V974M1391.5 972V974M1399.5 972V974M1407.5 972V976M1415.5 972V974M1423.5 972V974M1430.5 972V974M1438.5 972V974M1446.5 972V974M1454.5 972V976M1462.5 972V974M1470.5 972V974M1478.5 972V974M1485.5 972V974M1493.5 972V974M1501.5 972V976M1509.5 972V974M1517.5 972V974M1524.5 972V974M1532.5 972V974M1540.5 972V974M1548.5 972V976" stroke="#000" stroke-width="1" fill="none"/></svg><div class="a tick" style="left:212px;top:979px;width:41px;height:12px;text-align:center">0</div><div class="a tick" style="left:259px;top:979px;width:41px;height:12px;text-align:center">0.05</div><div class="a tick" style="left:306px;top:979px;width:41px;height:12px;text-align:center">0.1</div><div class="a tick" style="left:353px;top:979px;width:41px;height:12px;text-align:center">0.15</div><div class="a tick" style="left:400px;top:979px;width:41px;height:12px;text-align:center">0.2</div><div class="a tick" style="left:447px;top:979px;width:41px;height:12px;text-align:center">0.25</div><div class="a tick" style="left:494px;top:979px;width:41px;height:12px;text-align:center">0.3</div><div class="a tick" style="left:541px;top:979px;width:41px;height:12px;text-align:center">0.35</div><div class="a tick" style="left:588px;top:979px;width:41px;height:12px;text-align:center">0.4</div><div class="a tick" style="left:635px;top:979px;width:41px;height:12px;text-align:center">0.45</div><div class="a tick" style="left:682px;top:979px;width:41px;height:12px;text-align:center">0.5</div><div class="a tick" style="left:729px;top:979px;width:41px;height:12px;text-align:center">0.55</div><div class="a tick" style="left:776px;top:979px;width:41px;height:12px;text-align:center">0.6</div><div class="a tick" style="left:823px;top:979px;width:41px;height:12px;text-align:center">0.65</div><div class="a tick" style="left:870px;top:979px;width:41px;height:12px;text-align:center">0.7</div><div class="a tick" style="left:917px;top:979px;width:41px;height:12px;text-align:center">0.75</div><div class="a tick" style="left:964px;top:979px;width:41px;height:12px;text-align:center">0.8</div><div class="a tick" style="left:1011px;top:979px;width:41px;height:12px;text-align:center">0.85</div><div class="a tick" style="left:1058px;top:979px;width:41px;height:12px;text-align:center">0.9</div><div class="a tick" style="left:1105px;top:979px;width:41px;height:12px;text-align:center">0.95</div><div class="a tick" style="left:1152px;top:979px;width:41px;height:12px;text-align:center">1</div><div class="a tick" style="left:1199px;top:979px;width:41px;height:12px;text-align:center">1.05</div><div class="a tick" style="left:1246px;top:979px;width:41px;height:12px;text-align:center">1.1</div><div class="a tick" style="left:1293px;top:979px;width:41px;height:12px;text-align:center">1.15</div><div class="a tick" style="left:1340px;top:979px;width:41px;height:12px;text-align:center">1.2</div><div class="a tick" style="left:1387px;top:979px;width:41px;height:12px;text-align:center">1.25</div><div class="a tick" style="left:1434px;top:979px;width:41px;height:12px;text-align:center">1.3</div><div class="a tick" style="left:1481px;top:979px;width:41px;height:12px;text-align:center">1.35</div><div class="a tick" style="left:1528px;top:979px;width:41px;height:12px;text-align:center">1.4</div><div class="a " style="left:850px;top:992px;width:80px;height:14px;text-align:center;font-size:12px;line-height:14px">时间&nbsp; S</div><div class="a tick" style="left:1555px;top:619.1px;letter-spacing:-.3px">0.07</div><div class="a tick" style="left:1555px;top:642.2px;letter-spacing:-.3px">0.06</div><div class="a tick" style="left:1555px;top:665.3px;letter-spacing:-.3px">0.05</div><div class="a tick" style="left:1555px;top:688.4px;letter-spacing:-.3px">0.04</div><div class="a tick" style="left:1555px;top:711.5px;letter-spacing:-.3px">0.03</div><div class="a tick" style="left:1555px;top:734.6px;letter-spacing:-.3px">0.02</div><div class="a tick" style="left:1555px;top:757.7px;letter-spacing:-.3px">0.01</div><div class="a tick" style="left:1555px;top:780.8px;letter-spacing:-.3px">0</div><div class="a tick" style="left:1555px;top:803.9px;letter-spacing:-.3px">-0.01</div><div class="a tick" style="left:1555px;top:827px;letter-spacing:-.3px">-0.02</div><div class="a tick" style="left:1555px;top:850.1px;letter-spacing:-.3px">-0.03</div><div class="a tick" style="left:1555px;top:873.2px;letter-spacing:-.3px">-0.04</div><div class="a tick" style="left:1555px;top:896.3px;letter-spacing:-.3px">-0.05</div><div class="a tick" style="left:1555px;top:919.4px;letter-spacing:-.3px">-0.06</div><div class="a tick" style="left:1555px;top:942.5px;letter-spacing:-.3px">-0.07</div><div class="a tick" style="left:213px;top:779.1px;width:12px;height:12px;text-align:right">0</div><div class="a " style="left:0px;top:0px;left:209px;top:785.500px;font-size:12px;line-height:14px;transform:translate(-50%,-50%) rotate(-90deg)">载荷 N</div><div class="a " style="left:0px;top:0px;left:1590px;top:786px;font-size:12px;line-height:14px;transform:translate(-50%,-50%) rotate(-90deg)">位移 mm</div><div class="a " style="left:1639px;top:109px;width:156px;height:482px;background:#fff"></div><div class="a " style="left:1639px;top:109px;width:281px;height:1px;background:#8a8a8a"></div><div class="a " style="left:1795px;top:110px;width:1px;height:481px;background:#b4b4b4"></div><div class="a " style="left:1796px;top:110px;width:124px;height:481px;background:#f0f0f0"></div><div class="a " style="left:1797px;top:115px;width:122px;height:1px;background:#dcdcdc"></div><div class="a " style="left:1684px;top:113px;font-size:12px;line-height:14px">(1)动态简版</div><svg width="1920" height="1040" viewBox="0 0 1920 1040"><path d="M1651 120.500H1661" stroke="#b0b0b0" stroke-dasharray="1 1"/><path d="M1664 121q2-4 4 0t4 0" fill="none" stroke="#e0a0a8" stroke-width="1"/></svg><div class="a " style="left:1644px;top:184px;width:149px;height:252px;background:#f0f0f0;box-shadow:0 1px 2px rgba(0,0,0,.25)"></div><div class="a " style="left:1644px;top:152px;width:149px;height:4px;background:linear-gradient(#fff,#e6e6e6 50%,#fff)"></div><div class="a " style="left:1652px;top:163px;color:#b4b4b4;font-size:12px;line-height:14px">信息</div><div class="a " style="left:1772px;top:163px;width:18px;height:18px;background:#e6e6e6"></div><div class="a " style="left:1645px;top:186px;width:146px;height:225px;background:#f2f2f2;border:2px solid;border-color:#7a7a7a #fff #fff #7a7a7a"></div><div class="a " style="left:1647px;top:190px;font-size:12px;line-height:16px">名称</div><div class="a " style="left:1694px;top:190px;font-size:12px;line-height:16px">动态简版</div><div class="a " style="left:1647px;top:206px;font-size:12px;line-height:16px">序号</div><div class="a sm" style="left:1694px;top:206px;line-height:16px">1</div><div class="a " style="left:1647px;top:222px;font-size:12px;line-height:16px">波形</div><div class="a sm" style="left:1694px;top:222px;line-height:16px">COSINE</div><div class="a " style="left:1647px;top:238px;font-size:12px;line-height:16px">控制方式</div><div class="a " style="left:1743px;top:238px;font-size:12px;line-height:16px">载荷</div><div class="a " style="left:1647px;top:254px;font-size:12px;line-height:16px">周期</div><div class="a sm" style="left:1694px;top:254px;line-height:16px">10000</div><div class="a " style="left:1647px;top:270px;font-size:12px;line-height:16px">频率</div><div class="a sm" style="left:1694px;top:270px;line-height:16px">40Hz</div><div class="a " style="left:1647px;top:286px;font-size:12px;line-height:16px">初值</div><div class="a sm" style="left:1694px;top:286px;line-height:16px">0</div><div class="a sm" style="left:1743px;top:286px;line-height:16px">N</div><div class="a " style="left:1647px;top:302px;font-size:12px;line-height:16px">振幅</div><div class="a sm" style="left:1694px;top:302px;line-height:16px">250</div><div class="a sm" style="left:1743px;top:302px;line-height:16px">N</div><div class="a " style="left:1647px;top:318px;font-size:12px;line-height:16px">停止目标</div><div class="a sm" style="left:1743px;top:318px;line-height:16px">0</div><div class="a sm" style="left:1694px;top:334px;line-height:16px">N</div><div class="a " style="left:1731px;top:413px;width:60px;height:21px;border:1px solid #555;background:#f2f2f2;text-align:center;font-size:12px;line-height:19px">关闭</div><div class="a " style="left:1799px;top:128px;width:116px;height:31px;background:#0a800a;border:1px solid #b8b8b8;outline:1px solid #f8f8f8;outline-offset:-2px"></div><div class="a " style="left:1799px;top:128px;width:116px;height:31px;text-align:center;color:#fff;font-weight:bold;font-size:19px;line-height:30px">联机</div><div class="a " style="left:1801px;top:166px;width:38px;height:29px;border:1px solid #000;text-align:center;color:#a8a8a8;font-weight:bold;font-size:17px;line-height:28px">S</div><div class="a " style="left:1876px;top:167px;width:38px;height:29px;border:1px solid #000;text-align:center;color:#000;font-size:17px;line-height:29px">F</div><svg width="1920" height="1040" viewBox="0 0 1920 1040"><g fill="#ffee00" stroke="#d8c828" stroke-width=".6"><path d="M1810 221L1819 210L1828 221Z"/><path d="M1810 232L1819 221L1828 232Z"/><path d="M1810 270L1819 257L1828 270Z"/><path d="M1810 343L1819 356L1828 343Z"/><path d="M1810 378L1819 389L1828 378Z"/><path d="M1810 388L1819 399L1828 388Z"/></g><rect x="1812" y="307" width="14" height="5" fill="#ffee00"/><path d="M1905.700 367H1912.900V395H1916L1909.300 409.500L1902.700 395H1905.700Z" fill="#f00808"/></svg><div class="a " style="left:1828px;top:214px;font-weight:bold;font-size:10.500px;line-height:12px">100mm/min</div><div class="a " style="left:1834px;top:259px;font-weight:bold;font-size:10.500px;line-height:12px">10mm/min</div><div class="a " style="left:1802px;top:293px;width:91px;height:30px;border:1px solid #000"></div><div class="a " style="left:1851px;top:298px;font-weight:bold;font-size:17px;line-height:20px">停止</div><div class="a " style="left:1834px;top:343px;font-weight:bold;font-size:10.500px;line-height:12px">10mm/min</div><div class="a " style="left:1828px;top:384px;font-weight:bold;font-size:10.500px;line-height:12px">100mm/min</div><div class="a " style="left:1801px;top:454px;width:38px;height:34px;border:1px solid #000;text-align:center;color:#a8a8a8;font-weight:bold;font-size:10px;line-height:32px">ON</div><div class="a " style="left:1874px;top:454px;width:39px;height:34px;border:1px solid #000;text-align:center;color:#000;font-weight:bold;font-size:10px;line-height:32px">OFF</div><div class="a " style="left:1639px;top:591px;width:281px;height:99px;background:#fff;border:2px solid #000"></div><div class="a " style="left:1675px;top:593px;width:1px;height:95px;background:#c8c8c8"></div><div class="a " style="left:1710px;top:593px;width:1px;height:95px;background:#c8c8c8"></div><div class="a " style="left:1745px;top:593px;width:1px;height:95px;background:#c8c8c8"></div><div class="a " style="left:1780px;top:593px;width:1px;height:95px;background:#c8c8c8"></div><div class="a " style="left:1815px;top:593px;width:1px;height:95px;background:#c8c8c8"></div><div class="a " style="left:1850px;top:593px;width:1px;height:95px;background:#c8c8c8"></div><div class="a " style="left:1881px;top:593px;width:1px;height:95px;background:#c8c8c8"></div><div class="a " style="left:1641px;top:636px;width:277px;height:1px;background:#c8c8c8"></div><div class="a " style="left:1641px;top:662px;width:277px;height:1px;background:#c8c8c8"></div><div class="a " style="left:1641px;top:637px;width:34px;height:25px;background:#0078d7;color:#fff;font-size:12px;line-height:25px;text-align:center">下限</div><div class="a " style="left:1641px;top:663px;width:34px;height:25px;font-size:12px;line-height:25px;text-align:center">上限</div><div class="a " style="left:1641px;top:597.25px;width:34px;height:34.5px;text-align:center;font-size:12px;line-height:11.5px;white-space:normal">限<br>制<br>项</div><div class="a " style="left:1675px;top:608.75px;width:35px;height:11.5px;text-align:center;font-size:12px;line-height:11.5px;white-space:normal">位移</div><div class="a " style="left:1710px;top:608.75px;width:35px;height:11.5px;text-align:center;font-size:12px;line-height:11.5px;white-space:normal">载荷</div><div class="a " style="left:1745px;top:603px;width:35px;height:23px;text-align:center;font-size:12px;line-height:11.5px;white-space:normal">引伸<br>计1</div><div class="a " style="left:1780px;top:603px;width:35px;height:23px;text-align:center;font-size:12px;line-height:11.5px;white-space:normal">引伸<br>计2</div><div class="a " style="left:1815px;top:603px;width:35px;height:23px;text-align:center;font-size:12px;line-height:11.5px;white-space:normal">引伸<br>计3</div><div class="a " style="left:1850px;top:597.25px;width:31px;height:34.5px;text-align:center;font-size:12px;line-height:11.5px;white-space:normal">引<br>伸<br>计4</div><div class="a " style="left:1881px;top:597.25px;width:37px;height:34.5px;text-align:center;font-size:12px;line-height:11.5px;white-space:normal">载荷<br>最小<br>振幅</div><svg width="1920" height="1040" viewBox="0 0 1920 1040"><g fill="#2ec48c"><circle cx="1692.5" cy="650" r="6"/><circle cx="1692.5" cy="675" r="6"/><circle cx="1727.5" cy="650" r="6"/><circle cx="1727.5" cy="675" r="6"/><circle cx="1762.5" cy="650" r="6"/><circle cx="1762.5" cy="675" r="6"/><circle cx="1797.5" cy="650" r="6"/><circle cx="1797.5" cy="675" r="6"/><circle cx="1832.5" cy="650" r="6"/><circle cx="1832.5" cy="675" r="6"/><circle cx="1865.5" cy="650" r="6"/><circle cx="1865.5" cy="675" r="6"/><circle cx="1899.5" cy="650" r="6"/></g></svg><div class="a " style="left:1639.5px;top:690px;width:280.5px;height:322.5px;background:#f0f0f0;border-top:2px solid #8a8a8a;border-left:1px solid #8a8a8a;border-bottom:1px solid #fff;border-right:1px solid #fff"></div><div class="a " style="left:1641px;top:693px;color:#c81818;font-size:12px;line-height:15px">试验开始时间<span class="mono" style="font-size:10px;margin-left:6px">2025/12/7&nbsp;18:45:13</span></div><div class="a " style="left:1641px;top:709px;color:#1818a0;font-size:12px;line-height:15px">正在运行<span style="margin-left:7px">动态简版</span><span class="mono" style="font-size:10px;margin-left:8px">(1)</span><span class="mono" style="font-size:10px;margin-left:6px">2025/12/7&nbsp;18:45:13</span></div><div class="a " style="left:0px;top:1013px;width:1920px;height:27px;background:#f0f0f0"></div><div class="a " style="left:150px;top:1012.3px;width:1770px;height:1px;background:#8c8c8c"></div><div class="a " style="left:4px;top:1020px;font-size:12.500px;line-height:16px">数据存储:D:\\2025年12月07日tmpF9B9</div><div class="a " style="left:256.5px;top:1019.5px;font-size:12.500px;line-height:16px">?0</div><div class="a " style="left:295.5px;top:1019.5px;font-size:12px;line-height:16px">峰谷值刷新</div><div class="a " style="left:396px;top:1019.5px;font-size:12px;line-height:16px">峰值控制</div><div class="a " style="left:465px;top:1019.5px;font-size:12px;line-height:16px">输出%</div><div class="a " style="left:508px;top:1019.5px;font-size:12px;line-height:16px">0.23</div><div class="a " style="left:540px;top:1019.5px;font-size:12px;line-height:16px">命令</div><div class="a " style="left:572.5px;top:1019.5px;font-size:12px;line-height:16px">0.073</div><div class="a " style="left:722.5px;top:1014px;font-family:'DejaVu Sans',sans-serif;font-size:19px;line-height:24px;color:#6cb63c">♻</div><div class="a " style="left:753.5px;top:1019px;font-size:12px;line-height:16px">节能</div><div class="a " style="left:824px;top:1019px;font-size:12px;line-height:16px">快捷移动</div><div class="a " style="left:881.5px;top:1019px;font-size:12px;line-height:16px">油源状态</div><div class="a " style="left:992px;top:1015px;width:75px;height:20.5px;border:1px solid #adadad;background:#e1e1e1;text-align:center;font-size:12px;line-height:18px">打开</div><svg width="1920" height="1040" viewBox="0 0 1920 1040"><path d="M365.200 1026.300h7l-3.500 3.700z" fill="#000"/><path d="M452.800 1026.300h7.400l-3.700 3.700z" fill="#000"/><circle cx="974.200" cy="1025" r="8.800" fill="#f80000"/><path d="M804 1019.800l3.800 4h-7.600zM804 1033.200l3.800-4h-7.600z" fill="#e02828"/><rect x="798" y="1025" width="12" height="2.600" fill="#181818"/><circle cx="283.500" cy="1027.500" r="5" fill="none" stroke="#e02828" stroke-width="1.400" stroke-dasharray="2.200 1.300"/><path d="M279.500 1029l1.500-3l1.500 3l1.500-3l1.500 3l1.500-3" fill="none" stroke="#e02828" stroke-width="1"/><path d="M379 1022.200h10" stroke="#e02838" stroke-width="1.200"/><path d="M380.500 1022v6.500h2.200v-6h2.200v6h2.200v-4" fill="none" stroke="#e02838" stroke-width="1"/><path d="M379 1029.600h10" stroke="#4040d0" stroke-width="1.100"/></svg></body></html>
